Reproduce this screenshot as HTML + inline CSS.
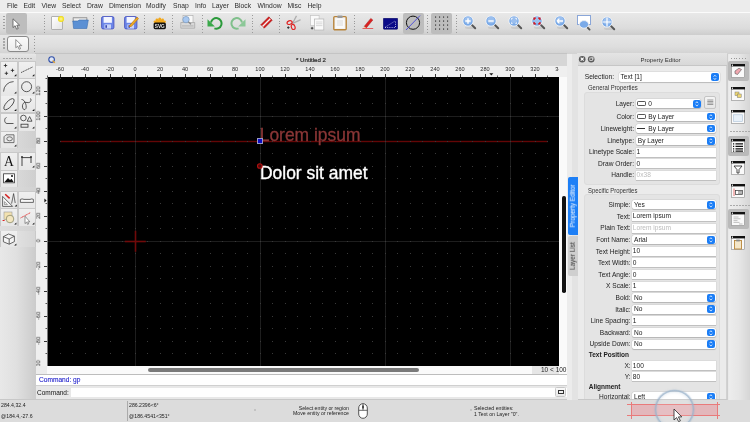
<!DOCTYPE html><html><head><meta charset="utf-8"><style>
*{margin:0;padding:0;box-sizing:border-box}
html,body{width:750px;height:422px;overflow:hidden;background:#e6e6e6;font-family:"Liberation Sans",sans-serif;color:#222;-webkit-font-smoothing:antialiased}
body>*{will-change:transform}
.a{position:absolute}
.t{position:absolute;white-space:nowrap;line-height:1}
#menu{left:0;top:0;width:750px;height:12.5px;background:#ececec}
#menu span{position:absolute;top:2.2px;font-size:6.75px;color:#2e2e2e}
#tb1{left:0;top:12px;width:750px;height:22.6px;background:linear-gradient(#fbfbfb 0,#fbfbfb 0.9px,#e8e8e8 1.2px,#dcdcdc 70%,#cdcdcd)}
#tb2{left:0;top:34.6px;width:750px;height:19px;background:linear-gradient(#e6e6e6,#dedede 60%,#d2d2d2)}
#left{left:0;top:53px;width:36px;height:346px;background:#e4e4e4;border-right:1px solid #c8c8c8}
#doc{left:36px;top:53px;width:531px;height:346px;background:#eaeaea}
#doctitle{left:36px;top:53px;width:531px;height:13px;background:#d6d6d6;border-top:1px solid #c4c4c4}
#rulerT{left:47px;top:66px;width:512px;height:11px;background:#efefef}
#rulerL{left:36px;top:77px;width:11px;height:289px;background:#efefef}
#corner{left:36px;top:66px;width:11px;height:11px;background:#efefef}
#canvas{left:47px;top:77px;width:512px;height:289px;background:#000;overflow:hidden}
#vscroll{left:559px;top:77.3px;width:7.5px;height:289px;background:#fafafa}
#hscroll{left:36px;top:366px;width:531px;height:8px;background:#fafafa}
#hist{left:36px;top:374px;width:531px;height:11px;background:#fff;border-top:1px solid #bdbdbd}
#cmd{left:36px;top:385px;width:531px;height:14px;background:#e8e8e8;border-top:1px solid #d0d0d0}
#gap{left:567px;top:53px;width:10px;height:346px;background:#dedede}
#prop{left:577px;top:53px;width:149px;height:346px;background:#ececec;border-left:1px solid #cfcfcf}
#rtb{left:726px;top:53px;width:24px;height:346px;background:linear-gradient(90deg,#d4d4d4,#e8e8e8 3px,#e4e4e4)}
#status{left:0;top:399px;width:750px;height:23px;background:#dcdcdc;border-top:1px solid #c8c8c8}
.rl{position:absolute;font-size:5.6px;line-height:1;color:#2a2a2a;white-space:nowrap}
</style></head><body>
<div id="menu" class="a"><span style="left:7px">File</span><span style="left:23.5px">Edit</span><span style="left:41.5px">View</span><span style="left:62px">Select</span><span style="left:87px">Draw</span><span style="left:109px">Dimension</span><span style="left:146px">Modify</span><span style="left:173px">Snap</span><span style="left:195px">Info</span><span style="left:212px">Layer</span><span style="left:234.5px">Block</span><span style="left:257.5px">Window</span><span style="left:287.5px">Misc</span><span style="left:307.5px">Help</span></div>
<div id="tb1" class="a"></div><div id="tb2" class="a"></div>
<div id="doc" class="a"></div><div id="doctitle" class="a"></div>
<div class="t" style="left:296px;top:57.2px;font-size:6.15px;color:#2a2a2a;-webkit-text-stroke:0.2px #2a2a2a">* Untitled 2</div>
<div id="corner" class="a"></div><div id="rulerT" class="a"></div><div id="rulerL" class="a"></div>
<svg class="a" style="left:47px;top:77px" width="512" height="289" viewBox="0 0 512 289"><rect width="512" height="289" fill="#000"/><rect x="88" y="0" width="1" height="289" fill="#1e1e1e"/><rect x="213" y="0" width="1" height="289" fill="#1e1e1e"/><rect x="338" y="0" width="1" height="289" fill="#1e1e1e"/><rect x="463" y="0" width="1" height="289" fill="#1e1e1e"/><rect x="0" y="39" width="512" height="1" fill="#1e1e1e"/><rect x="0" y="164" width="512" height="1" fill="#1e1e1e"/><rect x="13" y="63.80000000000001" width="488" height="1.4" fill="#640606"/><path d="M0 1h1v1h-1zM0 14h1v1h-1zM0 26h1v1h-1zM0 39h1v1h-1zM0 51h1v1h-1zM0 64h1v1h-1zM0 76h1v1h-1zM0 89h1v1h-1zM0 101h1v1h-1zM0 114h1v1h-1zM0 126h1v1h-1zM0 139h1v1h-1zM0 151h1v1h-1zM0 164h1v1h-1zM0 176h1v1h-1zM0 189h1v1h-1zM0 201h1v1h-1zM0 214h1v1h-1zM0 226h1v1h-1zM0 239h1v1h-1zM0 251h1v1h-1zM0 264h1v1h-1zM0 276h1v1h-1zM13 1h1v1h-1zM13 14h1v1h-1zM13 26h1v1h-1zM13 39h1v1h-1zM13 51h1v1h-1zM13 64h1v1h-1zM13 76h1v1h-1zM13 89h1v1h-1zM13 101h1v1h-1zM13 114h1v1h-1zM13 126h1v1h-1zM13 139h1v1h-1zM13 151h1v1h-1zM13 164h1v1h-1zM13 176h1v1h-1zM13 189h1v1h-1zM13 201h1v1h-1zM13 214h1v1h-1zM13 226h1v1h-1zM13 239h1v1h-1zM13 251h1v1h-1zM13 264h1v1h-1zM13 276h1v1h-1zM25 1h1v1h-1zM25 14h1v1h-1zM25 26h1v1h-1zM25 39h1v1h-1zM25 51h1v1h-1zM25 64h1v1h-1zM25 76h1v1h-1zM25 89h1v1h-1zM25 101h1v1h-1zM25 114h1v1h-1zM25 126h1v1h-1zM25 139h1v1h-1zM25 151h1v1h-1zM25 164h1v1h-1zM25 176h1v1h-1zM25 189h1v1h-1zM25 201h1v1h-1zM25 214h1v1h-1zM25 226h1v1h-1zM25 239h1v1h-1zM25 251h1v1h-1zM25 264h1v1h-1zM25 276h1v1h-1zM38 1h1v1h-1zM38 14h1v1h-1zM38 26h1v1h-1zM38 39h1v1h-1zM38 51h1v1h-1zM38 64h1v1h-1zM38 76h1v1h-1zM38 89h1v1h-1zM38 101h1v1h-1zM38 114h1v1h-1zM38 126h1v1h-1zM38 139h1v1h-1zM38 151h1v1h-1zM38 164h1v1h-1zM38 176h1v1h-1zM38 189h1v1h-1zM38 201h1v1h-1zM38 214h1v1h-1zM38 226h1v1h-1zM38 239h1v1h-1zM38 251h1v1h-1zM38 264h1v1h-1zM38 276h1v1h-1zM50 1h1v1h-1zM50 14h1v1h-1zM50 26h1v1h-1zM50 39h1v1h-1zM50 51h1v1h-1zM50 64h1v1h-1zM50 76h1v1h-1zM50 89h1v1h-1zM50 101h1v1h-1zM50 114h1v1h-1zM50 126h1v1h-1zM50 139h1v1h-1zM50 151h1v1h-1zM50 164h1v1h-1zM50 176h1v1h-1zM50 189h1v1h-1zM50 201h1v1h-1zM50 214h1v1h-1zM50 226h1v1h-1zM50 239h1v1h-1zM50 251h1v1h-1zM50 264h1v1h-1zM50 276h1v1h-1zM63 1h1v1h-1zM63 14h1v1h-1zM63 26h1v1h-1zM63 39h1v1h-1zM63 51h1v1h-1zM63 64h1v1h-1zM63 76h1v1h-1zM63 89h1v1h-1zM63 101h1v1h-1zM63 114h1v1h-1zM63 126h1v1h-1zM63 139h1v1h-1zM63 151h1v1h-1zM63 164h1v1h-1zM63 176h1v1h-1zM63 189h1v1h-1zM63 201h1v1h-1zM63 214h1v1h-1zM63 226h1v1h-1zM63 239h1v1h-1zM63 251h1v1h-1zM63 264h1v1h-1zM63 276h1v1h-1zM75 1h1v1h-1zM75 14h1v1h-1zM75 26h1v1h-1zM75 39h1v1h-1zM75 51h1v1h-1zM75 64h1v1h-1zM75 76h1v1h-1zM75 89h1v1h-1zM75 101h1v1h-1zM75 114h1v1h-1zM75 126h1v1h-1zM75 139h1v1h-1zM75 151h1v1h-1zM75 164h1v1h-1zM75 176h1v1h-1zM75 189h1v1h-1zM75 201h1v1h-1zM75 214h1v1h-1zM75 226h1v1h-1zM75 239h1v1h-1zM75 251h1v1h-1zM75 264h1v1h-1zM75 276h1v1h-1zM88 1h1v1h-1zM88 14h1v1h-1zM88 26h1v1h-1zM88 39h1v1h-1zM88 51h1v1h-1zM88 64h1v1h-1zM88 76h1v1h-1zM88 89h1v1h-1zM88 101h1v1h-1zM88 114h1v1h-1zM88 126h1v1h-1zM88 139h1v1h-1zM88 151h1v1h-1zM88 164h1v1h-1zM88 176h1v1h-1zM88 189h1v1h-1zM88 201h1v1h-1zM88 214h1v1h-1zM88 226h1v1h-1zM88 239h1v1h-1zM88 251h1v1h-1zM88 264h1v1h-1zM88 276h1v1h-1zM100 1h1v1h-1zM100 14h1v1h-1zM100 26h1v1h-1zM100 39h1v1h-1zM100 51h1v1h-1zM100 64h1v1h-1zM100 76h1v1h-1zM100 89h1v1h-1zM100 101h1v1h-1zM100 114h1v1h-1zM100 126h1v1h-1zM100 139h1v1h-1zM100 151h1v1h-1zM100 164h1v1h-1zM100 176h1v1h-1zM100 189h1v1h-1zM100 201h1v1h-1zM100 214h1v1h-1zM100 226h1v1h-1zM100 239h1v1h-1zM100 251h1v1h-1zM100 264h1v1h-1zM100 276h1v1h-1zM113 1h1v1h-1zM113 14h1v1h-1zM113 26h1v1h-1zM113 39h1v1h-1zM113 51h1v1h-1zM113 64h1v1h-1zM113 76h1v1h-1zM113 89h1v1h-1zM113 101h1v1h-1zM113 114h1v1h-1zM113 126h1v1h-1zM113 139h1v1h-1zM113 151h1v1h-1zM113 164h1v1h-1zM113 176h1v1h-1zM113 189h1v1h-1zM113 201h1v1h-1zM113 214h1v1h-1zM113 226h1v1h-1zM113 239h1v1h-1zM113 251h1v1h-1zM113 264h1v1h-1zM113 276h1v1h-1zM125 1h1v1h-1zM125 14h1v1h-1zM125 26h1v1h-1zM125 39h1v1h-1zM125 51h1v1h-1zM125 64h1v1h-1zM125 76h1v1h-1zM125 89h1v1h-1zM125 101h1v1h-1zM125 114h1v1h-1zM125 126h1v1h-1zM125 139h1v1h-1zM125 151h1v1h-1zM125 164h1v1h-1zM125 176h1v1h-1zM125 189h1v1h-1zM125 201h1v1h-1zM125 214h1v1h-1zM125 226h1v1h-1zM125 239h1v1h-1zM125 251h1v1h-1zM125 264h1v1h-1zM125 276h1v1h-1zM138 1h1v1h-1zM138 14h1v1h-1zM138 26h1v1h-1zM138 39h1v1h-1zM138 51h1v1h-1zM138 64h1v1h-1zM138 76h1v1h-1zM138 89h1v1h-1zM138 101h1v1h-1zM138 114h1v1h-1zM138 126h1v1h-1zM138 139h1v1h-1zM138 151h1v1h-1zM138 164h1v1h-1zM138 176h1v1h-1zM138 189h1v1h-1zM138 201h1v1h-1zM138 214h1v1h-1zM138 226h1v1h-1zM138 239h1v1h-1zM138 251h1v1h-1zM138 264h1v1h-1zM138 276h1v1h-1zM150 1h1v1h-1zM150 14h1v1h-1zM150 26h1v1h-1zM150 39h1v1h-1zM150 51h1v1h-1zM150 64h1v1h-1zM150 76h1v1h-1zM150 89h1v1h-1zM150 101h1v1h-1zM150 114h1v1h-1zM150 126h1v1h-1zM150 139h1v1h-1zM150 151h1v1h-1zM150 164h1v1h-1zM150 176h1v1h-1zM150 189h1v1h-1zM150 201h1v1h-1zM150 214h1v1h-1zM150 226h1v1h-1zM150 239h1v1h-1zM150 251h1v1h-1zM150 264h1v1h-1zM150 276h1v1h-1zM163 1h1v1h-1zM163 14h1v1h-1zM163 26h1v1h-1zM163 39h1v1h-1zM163 51h1v1h-1zM163 64h1v1h-1zM163 76h1v1h-1zM163 89h1v1h-1zM163 101h1v1h-1zM163 114h1v1h-1zM163 126h1v1h-1zM163 139h1v1h-1zM163 151h1v1h-1zM163 164h1v1h-1zM163 176h1v1h-1zM163 189h1v1h-1zM163 201h1v1h-1zM163 214h1v1h-1zM163 226h1v1h-1zM163 239h1v1h-1zM163 251h1v1h-1zM163 264h1v1h-1zM163 276h1v1h-1zM175 1h1v1h-1zM175 14h1v1h-1zM175 26h1v1h-1zM175 39h1v1h-1zM175 51h1v1h-1zM175 64h1v1h-1zM175 76h1v1h-1zM175 89h1v1h-1zM175 101h1v1h-1zM175 114h1v1h-1zM175 126h1v1h-1zM175 139h1v1h-1zM175 151h1v1h-1zM175 164h1v1h-1zM175 176h1v1h-1zM175 189h1v1h-1zM175 201h1v1h-1zM175 214h1v1h-1zM175 226h1v1h-1zM175 239h1v1h-1zM175 251h1v1h-1zM175 264h1v1h-1zM175 276h1v1h-1zM188 1h1v1h-1zM188 14h1v1h-1zM188 26h1v1h-1zM188 39h1v1h-1zM188 51h1v1h-1zM188 64h1v1h-1zM188 76h1v1h-1zM188 89h1v1h-1zM188 101h1v1h-1zM188 114h1v1h-1zM188 126h1v1h-1zM188 139h1v1h-1zM188 151h1v1h-1zM188 164h1v1h-1zM188 176h1v1h-1zM188 189h1v1h-1zM188 201h1v1h-1zM188 214h1v1h-1zM188 226h1v1h-1zM188 239h1v1h-1zM188 251h1v1h-1zM188 264h1v1h-1zM188 276h1v1h-1zM200 1h1v1h-1zM200 14h1v1h-1zM200 26h1v1h-1zM200 39h1v1h-1zM200 51h1v1h-1zM200 64h1v1h-1zM200 76h1v1h-1zM200 89h1v1h-1zM200 101h1v1h-1zM200 114h1v1h-1zM200 126h1v1h-1zM200 139h1v1h-1zM200 151h1v1h-1zM200 164h1v1h-1zM200 176h1v1h-1zM200 189h1v1h-1zM200 201h1v1h-1zM200 214h1v1h-1zM200 226h1v1h-1zM200 239h1v1h-1zM200 251h1v1h-1zM200 264h1v1h-1zM200 276h1v1h-1zM213 1h1v1h-1zM213 14h1v1h-1zM213 26h1v1h-1zM213 39h1v1h-1zM213 51h1v1h-1zM213 64h1v1h-1zM213 76h1v1h-1zM213 89h1v1h-1zM213 101h1v1h-1zM213 114h1v1h-1zM213 126h1v1h-1zM213 139h1v1h-1zM213 151h1v1h-1zM213 164h1v1h-1zM213 176h1v1h-1zM213 189h1v1h-1zM213 201h1v1h-1zM213 214h1v1h-1zM213 226h1v1h-1zM213 239h1v1h-1zM213 251h1v1h-1zM213 264h1v1h-1zM213 276h1v1h-1zM225 1h1v1h-1zM225 14h1v1h-1zM225 26h1v1h-1zM225 39h1v1h-1zM225 51h1v1h-1zM225 64h1v1h-1zM225 76h1v1h-1zM225 89h1v1h-1zM225 101h1v1h-1zM225 114h1v1h-1zM225 126h1v1h-1zM225 139h1v1h-1zM225 151h1v1h-1zM225 164h1v1h-1zM225 176h1v1h-1zM225 189h1v1h-1zM225 201h1v1h-1zM225 214h1v1h-1zM225 226h1v1h-1zM225 239h1v1h-1zM225 251h1v1h-1zM225 264h1v1h-1zM225 276h1v1h-1zM238 1h1v1h-1zM238 14h1v1h-1zM238 26h1v1h-1zM238 39h1v1h-1zM238 51h1v1h-1zM238 64h1v1h-1zM238 76h1v1h-1zM238 89h1v1h-1zM238 101h1v1h-1zM238 114h1v1h-1zM238 126h1v1h-1zM238 139h1v1h-1zM238 151h1v1h-1zM238 164h1v1h-1zM238 176h1v1h-1zM238 189h1v1h-1zM238 201h1v1h-1zM238 214h1v1h-1zM238 226h1v1h-1zM238 239h1v1h-1zM238 251h1v1h-1zM238 264h1v1h-1zM238 276h1v1h-1zM250 1h1v1h-1zM250 14h1v1h-1zM250 26h1v1h-1zM250 39h1v1h-1zM250 51h1v1h-1zM250 64h1v1h-1zM250 76h1v1h-1zM250 89h1v1h-1zM250 101h1v1h-1zM250 114h1v1h-1zM250 126h1v1h-1zM250 139h1v1h-1zM250 151h1v1h-1zM250 164h1v1h-1zM250 176h1v1h-1zM250 189h1v1h-1zM250 201h1v1h-1zM250 214h1v1h-1zM250 226h1v1h-1zM250 239h1v1h-1zM250 251h1v1h-1zM250 264h1v1h-1zM250 276h1v1h-1zM263 1h1v1h-1zM263 14h1v1h-1zM263 26h1v1h-1zM263 39h1v1h-1zM263 51h1v1h-1zM263 64h1v1h-1zM263 76h1v1h-1zM263 89h1v1h-1zM263 101h1v1h-1zM263 114h1v1h-1zM263 126h1v1h-1zM263 139h1v1h-1zM263 151h1v1h-1zM263 164h1v1h-1zM263 176h1v1h-1zM263 189h1v1h-1zM263 201h1v1h-1zM263 214h1v1h-1zM263 226h1v1h-1zM263 239h1v1h-1zM263 251h1v1h-1zM263 264h1v1h-1zM263 276h1v1h-1zM275 1h1v1h-1zM275 14h1v1h-1zM275 26h1v1h-1zM275 39h1v1h-1zM275 51h1v1h-1zM275 64h1v1h-1zM275 76h1v1h-1zM275 89h1v1h-1zM275 101h1v1h-1zM275 114h1v1h-1zM275 126h1v1h-1zM275 139h1v1h-1zM275 151h1v1h-1zM275 164h1v1h-1zM275 176h1v1h-1zM275 189h1v1h-1zM275 201h1v1h-1zM275 214h1v1h-1zM275 226h1v1h-1zM275 239h1v1h-1zM275 251h1v1h-1zM275 264h1v1h-1zM275 276h1v1h-1zM288 1h1v1h-1zM288 14h1v1h-1zM288 26h1v1h-1zM288 39h1v1h-1zM288 51h1v1h-1zM288 64h1v1h-1zM288 76h1v1h-1zM288 89h1v1h-1zM288 101h1v1h-1zM288 114h1v1h-1zM288 126h1v1h-1zM288 139h1v1h-1zM288 151h1v1h-1zM288 164h1v1h-1zM288 176h1v1h-1zM288 189h1v1h-1zM288 201h1v1h-1zM288 214h1v1h-1zM288 226h1v1h-1zM288 239h1v1h-1zM288 251h1v1h-1zM288 264h1v1h-1zM288 276h1v1h-1zM300 1h1v1h-1zM300 14h1v1h-1zM300 26h1v1h-1zM300 39h1v1h-1zM300 51h1v1h-1zM300 64h1v1h-1zM300 76h1v1h-1zM300 89h1v1h-1zM300 101h1v1h-1zM300 114h1v1h-1zM300 126h1v1h-1zM300 139h1v1h-1zM300 151h1v1h-1zM300 164h1v1h-1zM300 176h1v1h-1zM300 189h1v1h-1zM300 201h1v1h-1zM300 214h1v1h-1zM300 226h1v1h-1zM300 239h1v1h-1zM300 251h1v1h-1zM300 264h1v1h-1zM300 276h1v1h-1zM313 1h1v1h-1zM313 14h1v1h-1zM313 26h1v1h-1zM313 39h1v1h-1zM313 51h1v1h-1zM313 64h1v1h-1zM313 76h1v1h-1zM313 89h1v1h-1zM313 101h1v1h-1zM313 114h1v1h-1zM313 126h1v1h-1zM313 139h1v1h-1zM313 151h1v1h-1zM313 164h1v1h-1zM313 176h1v1h-1zM313 189h1v1h-1zM313 201h1v1h-1zM313 214h1v1h-1zM313 226h1v1h-1zM313 239h1v1h-1zM313 251h1v1h-1zM313 264h1v1h-1zM313 276h1v1h-1zM325 1h1v1h-1zM325 14h1v1h-1zM325 26h1v1h-1zM325 39h1v1h-1zM325 51h1v1h-1zM325 64h1v1h-1zM325 76h1v1h-1zM325 89h1v1h-1zM325 101h1v1h-1zM325 114h1v1h-1zM325 126h1v1h-1zM325 139h1v1h-1zM325 151h1v1h-1zM325 164h1v1h-1zM325 176h1v1h-1zM325 189h1v1h-1zM325 201h1v1h-1zM325 214h1v1h-1zM325 226h1v1h-1zM325 239h1v1h-1zM325 251h1v1h-1zM325 264h1v1h-1zM325 276h1v1h-1zM338 1h1v1h-1zM338 14h1v1h-1zM338 26h1v1h-1zM338 39h1v1h-1zM338 51h1v1h-1zM338 64h1v1h-1zM338 76h1v1h-1zM338 89h1v1h-1zM338 101h1v1h-1zM338 114h1v1h-1zM338 126h1v1h-1zM338 139h1v1h-1zM338 151h1v1h-1zM338 164h1v1h-1zM338 176h1v1h-1zM338 189h1v1h-1zM338 201h1v1h-1zM338 214h1v1h-1zM338 226h1v1h-1zM338 239h1v1h-1zM338 251h1v1h-1zM338 264h1v1h-1zM338 276h1v1h-1zM350 1h1v1h-1zM350 14h1v1h-1zM350 26h1v1h-1zM350 39h1v1h-1zM350 51h1v1h-1zM350 64h1v1h-1zM350 76h1v1h-1zM350 89h1v1h-1zM350 101h1v1h-1zM350 114h1v1h-1zM350 126h1v1h-1zM350 139h1v1h-1zM350 151h1v1h-1zM350 164h1v1h-1zM350 176h1v1h-1zM350 189h1v1h-1zM350 201h1v1h-1zM350 214h1v1h-1zM350 226h1v1h-1zM350 239h1v1h-1zM350 251h1v1h-1zM350 264h1v1h-1zM350 276h1v1h-1zM363 1h1v1h-1zM363 14h1v1h-1zM363 26h1v1h-1zM363 39h1v1h-1zM363 51h1v1h-1zM363 64h1v1h-1zM363 76h1v1h-1zM363 89h1v1h-1zM363 101h1v1h-1zM363 114h1v1h-1zM363 126h1v1h-1zM363 139h1v1h-1zM363 151h1v1h-1zM363 164h1v1h-1zM363 176h1v1h-1zM363 189h1v1h-1zM363 201h1v1h-1zM363 214h1v1h-1zM363 226h1v1h-1zM363 239h1v1h-1zM363 251h1v1h-1zM363 264h1v1h-1zM363 276h1v1h-1zM375 1h1v1h-1zM375 14h1v1h-1zM375 26h1v1h-1zM375 39h1v1h-1zM375 51h1v1h-1zM375 64h1v1h-1zM375 76h1v1h-1zM375 89h1v1h-1zM375 101h1v1h-1zM375 114h1v1h-1zM375 126h1v1h-1zM375 139h1v1h-1zM375 151h1v1h-1zM375 164h1v1h-1zM375 176h1v1h-1zM375 189h1v1h-1zM375 201h1v1h-1zM375 214h1v1h-1zM375 226h1v1h-1zM375 239h1v1h-1zM375 251h1v1h-1zM375 264h1v1h-1zM375 276h1v1h-1zM388 1h1v1h-1zM388 14h1v1h-1zM388 26h1v1h-1zM388 39h1v1h-1zM388 51h1v1h-1zM388 64h1v1h-1zM388 76h1v1h-1zM388 89h1v1h-1zM388 101h1v1h-1zM388 114h1v1h-1zM388 126h1v1h-1zM388 139h1v1h-1zM388 151h1v1h-1zM388 164h1v1h-1zM388 176h1v1h-1zM388 189h1v1h-1zM388 201h1v1h-1zM388 214h1v1h-1zM388 226h1v1h-1zM388 239h1v1h-1zM388 251h1v1h-1zM388 264h1v1h-1zM388 276h1v1h-1zM400 1h1v1h-1zM400 14h1v1h-1zM400 26h1v1h-1zM400 39h1v1h-1zM400 51h1v1h-1zM400 64h1v1h-1zM400 76h1v1h-1zM400 89h1v1h-1zM400 101h1v1h-1zM400 114h1v1h-1zM400 126h1v1h-1zM400 139h1v1h-1zM400 151h1v1h-1zM400 164h1v1h-1zM400 176h1v1h-1zM400 189h1v1h-1zM400 201h1v1h-1zM400 214h1v1h-1zM400 226h1v1h-1zM400 239h1v1h-1zM400 251h1v1h-1zM400 264h1v1h-1zM400 276h1v1h-1zM413 1h1v1h-1zM413 14h1v1h-1zM413 26h1v1h-1zM413 39h1v1h-1zM413 51h1v1h-1zM413 64h1v1h-1zM413 76h1v1h-1zM413 89h1v1h-1zM413 101h1v1h-1zM413 114h1v1h-1zM413 126h1v1h-1zM413 139h1v1h-1zM413 151h1v1h-1zM413 164h1v1h-1zM413 176h1v1h-1zM413 189h1v1h-1zM413 201h1v1h-1zM413 214h1v1h-1zM413 226h1v1h-1zM413 239h1v1h-1zM413 251h1v1h-1zM413 264h1v1h-1zM413 276h1v1h-1zM425 1h1v1h-1zM425 14h1v1h-1zM425 26h1v1h-1zM425 39h1v1h-1zM425 51h1v1h-1zM425 64h1v1h-1zM425 76h1v1h-1zM425 89h1v1h-1zM425 101h1v1h-1zM425 114h1v1h-1zM425 126h1v1h-1zM425 139h1v1h-1zM425 151h1v1h-1zM425 164h1v1h-1zM425 176h1v1h-1zM425 189h1v1h-1zM425 201h1v1h-1zM425 214h1v1h-1zM425 226h1v1h-1zM425 239h1v1h-1zM425 251h1v1h-1zM425 264h1v1h-1zM425 276h1v1h-1zM438 1h1v1h-1zM438 14h1v1h-1zM438 26h1v1h-1zM438 39h1v1h-1zM438 51h1v1h-1zM438 64h1v1h-1zM438 76h1v1h-1zM438 89h1v1h-1zM438 101h1v1h-1zM438 114h1v1h-1zM438 126h1v1h-1zM438 139h1v1h-1zM438 151h1v1h-1zM438 164h1v1h-1zM438 176h1v1h-1zM438 189h1v1h-1zM438 201h1v1h-1zM438 214h1v1h-1zM438 226h1v1h-1zM438 239h1v1h-1zM438 251h1v1h-1zM438 264h1v1h-1zM438 276h1v1h-1zM450 1h1v1h-1zM450 14h1v1h-1zM450 26h1v1h-1zM450 39h1v1h-1zM450 51h1v1h-1zM450 64h1v1h-1zM450 76h1v1h-1zM450 89h1v1h-1zM450 101h1v1h-1zM450 114h1v1h-1zM450 126h1v1h-1zM450 139h1v1h-1zM450 151h1v1h-1zM450 164h1v1h-1zM450 176h1v1h-1zM450 189h1v1h-1zM450 201h1v1h-1zM450 214h1v1h-1zM450 226h1v1h-1zM450 239h1v1h-1zM450 251h1v1h-1zM450 264h1v1h-1zM450 276h1v1h-1zM463 1h1v1h-1zM463 14h1v1h-1zM463 26h1v1h-1zM463 39h1v1h-1zM463 51h1v1h-1zM463 64h1v1h-1zM463 76h1v1h-1zM463 89h1v1h-1zM463 101h1v1h-1zM463 114h1v1h-1zM463 126h1v1h-1zM463 139h1v1h-1zM463 151h1v1h-1zM463 164h1v1h-1zM463 176h1v1h-1zM463 189h1v1h-1zM463 201h1v1h-1zM463 214h1v1h-1zM463 226h1v1h-1zM463 239h1v1h-1zM463 251h1v1h-1zM463 264h1v1h-1zM463 276h1v1h-1zM475 1h1v1h-1zM475 14h1v1h-1zM475 26h1v1h-1zM475 39h1v1h-1zM475 51h1v1h-1zM475 64h1v1h-1zM475 76h1v1h-1zM475 89h1v1h-1zM475 101h1v1h-1zM475 114h1v1h-1zM475 126h1v1h-1zM475 139h1v1h-1zM475 151h1v1h-1zM475 164h1v1h-1zM475 176h1v1h-1zM475 189h1v1h-1zM475 201h1v1h-1zM475 214h1v1h-1zM475 226h1v1h-1zM475 239h1v1h-1zM475 251h1v1h-1zM475 264h1v1h-1zM475 276h1v1h-1zM488 1h1v1h-1zM488 14h1v1h-1zM488 26h1v1h-1zM488 39h1v1h-1zM488 51h1v1h-1zM488 64h1v1h-1zM488 76h1v1h-1zM488 89h1v1h-1zM488 101h1v1h-1zM488 114h1v1h-1zM488 126h1v1h-1zM488 139h1v1h-1zM488 151h1v1h-1zM488 164h1v1h-1zM488 176h1v1h-1zM488 189h1v1h-1zM488 201h1v1h-1zM488 214h1v1h-1zM488 226h1v1h-1zM488 239h1v1h-1zM488 251h1v1h-1zM488 264h1v1h-1zM488 276h1v1h-1zM500 1h1v1h-1zM500 14h1v1h-1zM500 26h1v1h-1zM500 39h1v1h-1zM500 51h1v1h-1zM500 64h1v1h-1zM500 76h1v1h-1zM500 89h1v1h-1zM500 101h1v1h-1zM500 114h1v1h-1zM500 126h1v1h-1zM500 139h1v1h-1zM500 151h1v1h-1zM500 164h1v1h-1zM500 176h1v1h-1zM500 189h1v1h-1zM500 201h1v1h-1zM500 214h1v1h-1zM500 226h1v1h-1zM500 239h1v1h-1zM500 251h1v1h-1zM500 264h1v1h-1zM500 276h1v1h-1z" fill="#3a3a3a"/><rect x="0" y="0" width="1" height="289" fill="#7a7a7a"/><rect x="77.8" y="163.7" width="21" height="1.6" fill="#700a0a"/><rect x="87.69999999999999" y="153.8" width="1.6" height="21" fill="#700a0a"/><text x="212.7" y="63.80000000000001" font-family="Liberation Sans" font-size="17.46" fill="#8a3636" stroke="#8a3636" stroke-width="0.3">Lorem ipsum</text><text x="213" y="101.5" font-family="Liberation Sans" font-size="17.46" fill="#fff" stroke="#fff" stroke-width="0.35">Dolor sit amet</text><rect x="210.5" y="61.5" width="5" height="5" fill="#0c0cc0" stroke="#9a9ac8" stroke-width="1"/><circle cx="212.8" cy="89" r="2.3" fill="#500808" stroke="#b01010" stroke-width="1.1"/></svg>
<svg class="a" style="left:47px;top:66px" width="512" height="11"><line x1="0.5" y1="9.5" x2="0.5" y2="11" stroke="#555" stroke-width="1"/><line x1="13.5" y1="8" x2="13.5" y2="11" stroke="#333" stroke-width="1"/><line x1="25.5" y1="9.5" x2="25.5" y2="11" stroke="#555" stroke-width="1"/><line x1="38.5" y1="8" x2="38.5" y2="11" stroke="#333" stroke-width="1"/><line x1="50.5" y1="9.5" x2="50.5" y2="11" stroke="#555" stroke-width="1"/><line x1="63.5" y1="8" x2="63.5" y2="11" stroke="#333" stroke-width="1"/><line x1="75.5" y1="9.5" x2="75.5" y2="11" stroke="#555" stroke-width="1"/><line x1="88.5" y1="8" x2="88.5" y2="11" stroke="#333" stroke-width="1"/><line x1="100.5" y1="9.5" x2="100.5" y2="11" stroke="#555" stroke-width="1"/><line x1="113.5" y1="8" x2="113.5" y2="11" stroke="#333" stroke-width="1"/><line x1="125.5" y1="9.5" x2="125.5" y2="11" stroke="#555" stroke-width="1"/><line x1="138.5" y1="8" x2="138.5" y2="11" stroke="#333" stroke-width="1"/><line x1="150.5" y1="9.5" x2="150.5" y2="11" stroke="#555" stroke-width="1"/><line x1="163.5" y1="8" x2="163.5" y2="11" stroke="#333" stroke-width="1"/><line x1="175.5" y1="9.5" x2="175.5" y2="11" stroke="#555" stroke-width="1"/><line x1="188.5" y1="8" x2="188.5" y2="11" stroke="#333" stroke-width="1"/><line x1="200.5" y1="9.5" x2="200.5" y2="11" stroke="#555" stroke-width="1"/><line x1="213.5" y1="8" x2="213.5" y2="11" stroke="#333" stroke-width="1"/><line x1="225.5" y1="9.5" x2="225.5" y2="11" stroke="#555" stroke-width="1"/><line x1="238.5" y1="8" x2="238.5" y2="11" stroke="#333" stroke-width="1"/><line x1="250.5" y1="9.5" x2="250.5" y2="11" stroke="#555" stroke-width="1"/><line x1="263.5" y1="8" x2="263.5" y2="11" stroke="#333" stroke-width="1"/><line x1="275.5" y1="9.5" x2="275.5" y2="11" stroke="#555" stroke-width="1"/><line x1="288.5" y1="8" x2="288.5" y2="11" stroke="#333" stroke-width="1"/><line x1="300.5" y1="9.5" x2="300.5" y2="11" stroke="#555" stroke-width="1"/><line x1="313.5" y1="8" x2="313.5" y2="11" stroke="#333" stroke-width="1"/><line x1="325.5" y1="9.5" x2="325.5" y2="11" stroke="#555" stroke-width="1"/><line x1="338.5" y1="8" x2="338.5" y2="11" stroke="#333" stroke-width="1"/><line x1="350.5" y1="9.5" x2="350.5" y2="11" stroke="#555" stroke-width="1"/><line x1="363.5" y1="8" x2="363.5" y2="11" stroke="#333" stroke-width="1"/><line x1="375.5" y1="9.5" x2="375.5" y2="11" stroke="#555" stroke-width="1"/><line x1="388.5" y1="8" x2="388.5" y2="11" stroke="#333" stroke-width="1"/><line x1="400.5" y1="9.5" x2="400.5" y2="11" stroke="#555" stroke-width="1"/><line x1="413.5" y1="8" x2="413.5" y2="11" stroke="#333" stroke-width="1"/><line x1="425.5" y1="9.5" x2="425.5" y2="11" stroke="#555" stroke-width="1"/><line x1="438.5" y1="8" x2="438.5" y2="11" stroke="#333" stroke-width="1"/><line x1="450.5" y1="9.5" x2="450.5" y2="11" stroke="#555" stroke-width="1"/><line x1="463.5" y1="8" x2="463.5" y2="11" stroke="#333" stroke-width="1"/><line x1="475.5" y1="9.5" x2="475.5" y2="11" stroke="#555" stroke-width="1"/><line x1="488.5" y1="8" x2="488.5" y2="11" stroke="#333" stroke-width="1"/><line x1="500.5" y1="9.5" x2="500.5" y2="11" stroke="#555" stroke-width="1"/><path d="M442.3 7.2H446.3L444.3 9.6Z" fill="#111"/></svg>
<div class="rl" style="left:45.0px;top:67px;width:30px;text-align:center">-60</div>
<div class="rl" style="left:70.0px;top:67px;width:30px;text-align:center">-40</div>
<div class="rl" style="left:95.0px;top:67px;width:30px;text-align:center">-20</div>
<div class="rl" style="left:120.0px;top:67px;width:30px;text-align:center">0</div>
<div class="rl" style="left:145.0px;top:67px;width:30px;text-align:center">20</div>
<div class="rl" style="left:170.0px;top:67px;width:30px;text-align:center">40</div>
<div class="rl" style="left:195.0px;top:67px;width:30px;text-align:center">60</div>
<div class="rl" style="left:220.0px;top:67px;width:30px;text-align:center">80</div>
<div class="rl" style="left:245.0px;top:67px;width:30px;text-align:center">100</div>
<div class="rl" style="left:270.0px;top:67px;width:30px;text-align:center">120</div>
<div class="rl" style="left:295.0px;top:67px;width:30px;text-align:center">140</div>
<div class="rl" style="left:320.0px;top:67px;width:30px;text-align:center">160</div>
<div class="rl" style="left:345.0px;top:67px;width:30px;text-align:center">180</div>
<div class="rl" style="left:370.0px;top:67px;width:30px;text-align:center">200</div>
<div class="rl" style="left:395.0px;top:67px;width:30px;text-align:center">220</div>
<div class="rl" style="left:420.0px;top:67px;width:30px;text-align:center">240</div>
<div class="rl" style="left:445.0px;top:67px;width:30px;text-align:center">260</div>
<div class="rl" style="left:470.0px;top:67px;width:30px;text-align:center">280</div>
<div class="rl" style="left:495.0px;top:67px;width:30px;text-align:center">300</div>
<div class="rl" style="left:520.0px;top:67px;width:30px;text-align:center">320</div>
<div class="rl" style="left:545.0px;top:67px;width:30px;text-align:center">340</div>
<svg class="a" style="left:36px;top:77px" width="11" height="289"><line x1="9.5" y1="1.5" x2="11" y2="1.5" stroke="#555"/><line x1="8" y1="14.5" x2="11" y2="14.5" stroke="#333"/><line x1="9.5" y1="26.5" x2="11" y2="26.5" stroke="#555"/><line x1="8" y1="39.5" x2="11" y2="39.5" stroke="#333"/><line x1="9.5" y1="51.5" x2="11" y2="51.5" stroke="#555"/><line x1="8" y1="64.5" x2="11" y2="64.5" stroke="#333"/><line x1="9.5" y1="76.5" x2="11" y2="76.5" stroke="#555"/><line x1="8" y1="89.5" x2="11" y2="89.5" stroke="#333"/><line x1="9.5" y1="101.5" x2="11" y2="101.5" stroke="#555"/><line x1="8" y1="114.5" x2="11" y2="114.5" stroke="#333"/><line x1="9.5" y1="126.5" x2="11" y2="126.5" stroke="#555"/><line x1="8" y1="139.5" x2="11" y2="139.5" stroke="#333"/><line x1="9.5" y1="151.5" x2="11" y2="151.5" stroke="#555"/><line x1="8" y1="164.5" x2="11" y2="164.5" stroke="#333"/><line x1="9.5" y1="176.5" x2="11" y2="176.5" stroke="#555"/><line x1="8" y1="189.5" x2="11" y2="189.5" stroke="#333"/><line x1="9.5" y1="201.5" x2="11" y2="201.5" stroke="#555"/><line x1="8" y1="214.5" x2="11" y2="214.5" stroke="#333"/><line x1="9.5" y1="226.5" x2="11" y2="226.5" stroke="#555"/><line x1="8" y1="239.5" x2="11" y2="239.5" stroke="#333"/><line x1="9.5" y1="251.5" x2="11" y2="251.5" stroke="#555"/><line x1="8" y1="264.5" x2="11" y2="264.5" stroke="#333"/><line x1="9.5" y1="276.5" x2="11" y2="276.5" stroke="#555"/><path d="M8.4 121.5V125.5L10.6 123.5Z" fill="#111"/></svg>
<div class="rl" style="left:24.4px;top:88.2px;width:30px;text-align:center;transform:rotate(-90deg)">120</div>
<div class="rl" style="left:24.4px;top:113.2px;width:30px;text-align:center;transform:rotate(-90deg)">100</div>
<div class="rl" style="left:24.4px;top:138.2px;width:30px;text-align:center;transform:rotate(-90deg)">80</div>
<div class="rl" style="left:24.4px;top:163.2px;width:30px;text-align:center;transform:rotate(-90deg)">60</div>
<div class="rl" style="left:24.4px;top:188.2px;width:30px;text-align:center;transform:rotate(-90deg)">40</div>
<div class="rl" style="left:24.4px;top:213.2px;width:30px;text-align:center;transform:rotate(-90deg)">20</div>
<div class="rl" style="left:24.4px;top:238.2px;width:30px;text-align:center;transform:rotate(-90deg)">0</div>
<div class="rl" style="left:24.4px;top:263.2px;width:30px;text-align:center;transform:rotate(-90deg)">-20</div>
<div class="rl" style="left:24.4px;top:288.2px;width:30px;text-align:center;transform:rotate(-90deg)">-40</div>
<div class="rl" style="left:24.4px;top:313.2px;width:30px;text-align:center;transform:rotate(-90deg)">-60</div>
<div class="rl" style="left:24.4px;top:338.2px;width:30px;text-align:center;transform:rotate(-90deg)">-80</div>
<div class="rl" style="left:24.4px;top:363.2px;width:30px;text-align:center;transform:rotate(-90deg)">-100</div>
<div class="a" style="left:559px;top:66px;width:7.5px;height:11.3px;background:#efefef"></div><div id="vscroll" class="a"></div><div id="hscroll" class="a"></div><div id="hist" class="a"></div><div id="cmd" class="a"></div>
<div id="status" class="a"></div>
<div class="a" style="left:0;top:0;width:750px;height:399px;overflow:hidden"><div class="a" style="left:577px;top:53px;width:150px;height:13px;background:linear-gradient(#e4e4e4,#d8d8d8);border-bottom:1px solid #c6c6c6"></div><svg class="a" style="left:578px;top:55px" width="18" height="9" viewBox="0 0 18 9"><circle cx="4.2" cy="4.2" r="3.3" fill="#5a5a5a"/><path d="M2.7 2.7L5.7 5.7M5.7 2.7L2.7 5.7" stroke="#f4f4f4" stroke-width="1.2"/><rect x="3.5" y="3.5" width="1.4" height="1.4" fill="#fff"/><circle cx="13.2" cy="4.2" r="3.3" fill="#5a5a5a"/><rect x="11.8" y="3" width="2.6" height="2.4" fill="none" stroke="#eee" stroke-width="0.7"/><path d="M12.6 2.2H15.2V4.6" fill="none" stroke="#eee" stroke-width="0.6"/></svg><div class="t" style="left:640.5px;top:56.8px;font-size:6px;color:#333">Property Editor</div><div class="a" style="left:577px;top:66px;width:150px;height:333px;background:#ebebeb;border-left:1px solid #d2d2d2;border-right:1px solid #d2d2d2"></div><div class="t" style="left:584.7px;top:74px;font-size:6.7px;color:#222">Selection:</div><div class="a" style="left:618.5px;top:71.8px;width:101.10000000000002px;height:10.200000000000003px;background:#fff;border-radius:2px;box-shadow:0 0 0 0.5px rgba(0,0,0,0.07),0 0.5px 1px rgba(0,0,0,0.18)"></div><div class="t" style="left:620.5px;top:73.89999999999999px;font-size:6.6px;color:#222">Text [1]</div><div class="a" style="left:711.1px;top:72.5px;width:7.8px;height:8.800000000000002px;background:#1a7df6;border-radius:2px"></div><svg class="a" style="left:711.1px;top:72.5px" width="7.8" height="8.800000000000002" viewBox="0 0 7.8 8.800000000000002"><path d="M2.6 3.700000000000001L3.9 2.200000000000001L5.2 3.700000000000001M2.6 5.100000000000001L3.9 6.600000000000001L5.2 5.100000000000001" stroke="#fff" stroke-width="0.75" fill="none"/></svg><div class="t" style="left:587.6px;top:85.4px;font-size:6.3px;color:#333;transform:scaleX(0.94);transform-origin:0 0">General Properties</div><div class="a" style="left:584.2px;top:91.8px;width:136px;height:93px;background:#e4e4e4;border-radius:3px;border:1px solid #dcdcdc"></div><div class="t" style="left:587.8px;top:187.6px;font-size:6.3px;color:#333;transform:scaleX(0.94);transform-origin:0 0">Specific Properties</div><div class="a" style="left:584.2px;top:194px;width:136px;height:210px;background:#e4e4e4;border-radius:3px;border:1px solid #dcdcdc"></div><div class="t" style="right:116px;top:101.0px;font-size:6.6px;color:#222;font-weight:normal">Layer:</div><div class="a" style="left:635.8px;top:99.2px;width:65.5px;height:9.199999999999989px;background:#fff;border-radius:2px;box-shadow:0 0 0 0.5px rgba(0,0,0,0.07),0 0.5px 1px rgba(0,0,0,0.18)"></div><div class="a" style="left:637.0px;top:101.39999999999999px;width:8.8px;height:4.8px;border:0.8px solid #555;border-radius:1.2px;background:#fff"></div><div class="t" style="left:648.3px;top:100.8px;font-size:6.6px;color:#222">0</div><div class="a" style="left:692.8px;top:99.9px;width:7.8px;height:7.799999999999988px;background:#1a7df6;border-radius:2px"></div><svg class="a" style="left:692.8px;top:99.9px" width="7.8" height="7.799999999999988" viewBox="0 0 7.8 7.799999999999988"><path d="M2.6 3.199999999999994L3.9 1.699999999999994L5.2 3.199999999999994M2.6 4.599999999999994L3.9 6.099999999999994L5.2 4.599999999999994" stroke="#fff" stroke-width="0.75" fill="none"/></svg><div class="t" style="right:116px;top:113.7px;font-size:6.6px;color:#222;font-weight:normal">Color:</div><div class="a" style="left:635.8px;top:111.9px;width:80.0px;height:9.199999999999989px;background:#fff;border-radius:2px;box-shadow:0 0 0 0.5px rgba(0,0,0,0.07),0 0.5px 1px rgba(0,0,0,0.18)"></div><div class="a" style="left:637.0px;top:114.1px;width:8.8px;height:4.8px;border:0.8px solid #555;border-radius:1.2px;background:#fff"></div><div class="t" style="left:648.3px;top:113.5px;font-size:6.6px;color:#222">By Layer</div><div class="a" style="left:707.3px;top:112.60000000000001px;width:7.8px;height:7.799999999999988px;background:#1a7df6;border-radius:2px"></div><svg class="a" style="left:707.3px;top:112.60000000000001px" width="7.8" height="7.799999999999988" viewBox="0 0 7.8 7.799999999999988"><path d="M2.6 3.199999999999994L3.9 1.699999999999994L5.2 3.199999999999994M2.6 4.599999999999994L3.9 6.099999999999994L5.2 4.599999999999994" stroke="#fff" stroke-width="0.75" fill="none"/></svg><div class="t" style="right:116px;top:125.79999999999998px;font-size:6.6px;color:#222;font-weight:normal">Lineweight:</div><div class="a" style="left:635.8px;top:124.0px;width:80.0px;height:9.199999999999989px;background:#fff;border-radius:2px;box-shadow:0 0 0 0.5px rgba(0,0,0,0.07),0 0.5px 1px rgba(0,0,0,0.18)"></div><div class="a" style="left:637.3px;top:128.29999999999998px;width:8px;height:0.7px;background:#333"></div><div class="t" style="left:648.3px;top:125.6px;font-size:6.6px;color:#222">By Layer</div><div class="a" style="left:707.3px;top:124.7px;width:7.8px;height:7.799999999999988px;background:#1a7df6;border-radius:2px"></div><svg class="a" style="left:707.3px;top:124.7px" width="7.8" height="7.799999999999988" viewBox="0 0 7.8 7.799999999999988"><path d="M2.6 3.199999999999994L3.9 1.699999999999994L5.2 3.199999999999994M2.6 4.599999999999994L3.9 6.099999999999994L5.2 4.599999999999994" stroke="#fff" stroke-width="0.75" fill="none"/></svg><div class="t" style="right:116px;top:137.89999999999998px;font-size:6.6px;color:#222;font-weight:normal">Linetype:</div><div class="a" style="left:635.8px;top:136.1px;width:80.0px;height:9.199999999999989px;background:#fff;border-radius:2px;box-shadow:0 0 0 0.5px rgba(0,0,0,0.07),0 0.5px 1px rgba(0,0,0,0.18)"></div><div class="t" style="left:637.8px;top:137.7px;font-size:6.6px;color:#222">By Layer</div><div class="a" style="left:707.3px;top:136.79999999999998px;width:7.8px;height:7.799999999999988px;background:#1a7df6;border-radius:2px"></div><svg class="a" style="left:707.3px;top:136.79999999999998px" width="7.8" height="7.799999999999988" viewBox="0 0 7.8 7.799999999999988"><path d="M2.6 3.199999999999994L3.9 1.699999999999994L5.2 3.199999999999994M2.6 4.599999999999994L3.9 6.099999999999994L5.2 4.599999999999994" stroke="#fff" stroke-width="0.75" fill="none"/></svg><div class="t" style="right:116px;top:149.29999999999998px;font-size:6.6px;color:#222;font-weight:normal">Linetype Scale:</div><div class="a" style="left:635.8px;top:147.5px;width:80.40000000000009px;height:9.199999999999989px;background:#fff;box-shadow:0 0 0 0.5px rgba(0,0,0,0.08),0 0.5px 0.5px rgba(0,0,0,0.12)"></div><div class="t" style="left:636.5999999999999px;top:149.1px;font-size:6.6px;color:#222">1</div><div class="t" style="right:116px;top:160.79999999999998px;font-size:6.6px;color:#222;font-weight:normal">Draw Order:</div><div class="a" style="left:635.8px;top:159.0px;width:80.40000000000009px;height:9.199999999999989px;background:#fff;box-shadow:0 0 0 0.5px rgba(0,0,0,0.08),0 0.5px 0.5px rgba(0,0,0,0.12)"></div><div class="t" style="left:636.5999999999999px;top:160.6px;font-size:6.6px;color:#222">0</div><div class="t" style="right:116px;top:172.39999999999998px;font-size:6.6px;color:#222;font-weight:normal">Handle:</div><div class="a" style="left:635.8px;top:170.6px;width:80.40000000000009px;height:9.199999999999989px;background:#fff;box-shadow:0 0 0 0.5px rgba(0,0,0,0.08),0 0.5px 0.5px rgba(0,0,0,0.12)"></div><div class="t" style="left:636.5999999999999px;top:172.2px;font-size:6.6px;color:#bbb">0x38</div><div class="a" style="left:703.6px;top:96.4px;width:12.6px;height:12.4px;background:linear-gradient(#f4f4f4,#e6e6e6);border:0.8px solid #c4c4c4;border-radius:2px"></div><svg class="a" style="left:703.6px;top:96.4px" width="12.6" height="12.4"><path d="M3.3 4h6M3.3 5.5h6M3.3 7h6M3.3 8.5h6" stroke="#777" stroke-width="0.7"/></svg><div class="t" style="right:119.39999999999998px;top:201.99999999999997px;font-size:6.6px;color:#222;font-weight:normal">Simple:</div><div class="a" style="left:632px;top:200.2px;width:83.79999999999995px;height:9.199999999999989px;background:#fff;border-radius:2px;box-shadow:0 0 0 0.5px rgba(0,0,0,0.07),0 0.5px 1px rgba(0,0,0,0.18)"></div><div class="t" style="left:634px;top:201.79999999999998px;font-size:6.6px;color:#222">Yes</div><div class="a" style="left:707.3px;top:200.89999999999998px;width:7.8px;height:7.799999999999988px;background:#1a7df6;border-radius:2px"></div><svg class="a" style="left:707.3px;top:200.89999999999998px" width="7.8" height="7.799999999999988" viewBox="0 0 7.8 7.799999999999988"><path d="M2.6 3.199999999999994L3.9 1.699999999999994L5.2 3.199999999999994M2.6 4.599999999999994L3.9 6.099999999999994L5.2 4.599999999999994" stroke="#fff" stroke-width="0.75" fill="none"/></svg><div class="t" style="right:119.39999999999998px;top:213.6px;font-size:6.6px;color:#222;font-weight:normal">Text:</div><div class="a" style="left:632px;top:211.8px;width:84px;height:9.199999999999989px;background:#fff;box-shadow:0 0 0 0.5px rgba(0,0,0,0.08),0 0.5px 0.5px rgba(0,0,0,0.12)"></div><div class="t" style="left:632.8px;top:213.4px;font-size:6.6px;color:#222">Lorem ipsum</div><div class="t" style="right:119.39999999999998px;top:225.29999999999998px;font-size:6.6px;color:#222;font-weight:normal">Plain Text:</div><div class="a" style="left:632px;top:223.5px;width:84px;height:9.199999999999989px;background:#fff;box-shadow:0 0 0 0.5px rgba(0,0,0,0.08),0 0.5px 0.5px rgba(0,0,0,0.12)"></div><div class="t" style="left:632.8px;top:225.1px;font-size:6.6px;color:#bbb">Lorem ipsum</div><div class="t" style="right:119.39999999999998px;top:236.89999999999998px;font-size:6.6px;color:#222;font-weight:normal">Font Name:</div><div class="a" style="left:632px;top:235.1px;width:83.79999999999995px;height:9.199999999999989px;background:#fff;border-radius:2px;box-shadow:0 0 0 0.5px rgba(0,0,0,0.07),0 0.5px 1px rgba(0,0,0,0.18)"></div><div class="t" style="left:634px;top:236.7px;font-size:6.6px;color:#222">Arial</div><div class="a" style="left:707.3px;top:235.79999999999998px;width:7.8px;height:7.799999999999988px;background:#1a7df6;border-radius:2px"></div><svg class="a" style="left:707.3px;top:235.79999999999998px" width="7.8" height="7.799999999999988" viewBox="0 0 7.8 7.799999999999988"><path d="M2.6 3.199999999999994L3.9 1.699999999999994L5.2 3.199999999999994M2.6 4.599999999999994L3.9 6.099999999999994L5.2 4.599999999999994" stroke="#fff" stroke-width="0.75" fill="none"/></svg><div class="t" style="right:119.39999999999998px;top:248.49999999999997px;font-size:6.6px;color:#222;font-weight:normal">Text Height:</div><div class="a" style="left:632px;top:246.7px;width:84px;height:9.199999999999989px;background:#fff;box-shadow:0 0 0 0.5px rgba(0,0,0,0.08),0 0.5px 0.5px rgba(0,0,0,0.12)"></div><div class="t" style="left:632.8px;top:248.29999999999998px;font-size:6.6px;color:#222">10</div><div class="t" style="right:119.39999999999998px;top:260.1px;font-size:6.6px;color:#222;font-weight:normal">Text Width:</div><div class="a" style="left:632px;top:258.3px;width:84px;height:9.200000000000045px;background:#fff;box-shadow:0 0 0 0.5px rgba(0,0,0,0.08),0 0.5px 0.5px rgba(0,0,0,0.12)"></div><div class="t" style="left:632.8px;top:259.90000000000003px;font-size:6.6px;color:#222">0</div><div class="t" style="right:119.39999999999998px;top:271.7px;font-size:6.6px;color:#222;font-weight:normal">Text Angle:</div><div class="a" style="left:632px;top:269.9px;width:84px;height:9.200000000000045px;background:#fff;box-shadow:0 0 0 0.5px rgba(0,0,0,0.08),0 0.5px 0.5px rgba(0,0,0,0.12)"></div><div class="t" style="left:632.8px;top:271.5px;font-size:6.6px;color:#222">0</div><div class="t" style="right:119.39999999999998px;top:283.3px;font-size:6.6px;color:#222;font-weight:normal">X Scale:</div><div class="a" style="left:632px;top:281.5px;width:84px;height:9.200000000000045px;background:#fff;box-shadow:0 0 0 0.5px rgba(0,0,0,0.08),0 0.5px 0.5px rgba(0,0,0,0.12)"></div><div class="t" style="left:632.8px;top:283.1px;font-size:6.6px;color:#222">1</div><div class="t" style="right:119.39999999999998px;top:294.90000000000003px;font-size:6.6px;color:#222;font-weight:normal">Bold:</div><div class="a" style="left:632px;top:293.1px;width:83.79999999999995px;height:9.200000000000045px;background:#fff;border-radius:2px;box-shadow:0 0 0 0.5px rgba(0,0,0,0.07),0 0.5px 1px rgba(0,0,0,0.18)"></div><div class="t" style="left:634px;top:294.70000000000005px;font-size:6.6px;color:#222">No</div><div class="a" style="left:707.3px;top:293.8px;width:7.8px;height:7.800000000000045px;background:#1a7df6;border-radius:2px"></div><svg class="a" style="left:707.3px;top:293.8px" width="7.8" height="7.800000000000045" viewBox="0 0 7.8 7.800000000000045"><path d="M2.6 3.2000000000000224L3.9 1.7000000000000224L5.2 3.2000000000000224M2.6 4.600000000000023L3.9 6.100000000000023L5.2 4.600000000000023" stroke="#fff" stroke-width="0.75" fill="none"/></svg><div class="t" style="right:119.39999999999998px;top:306.5px;font-size:6.6px;color:#222;font-weight:normal">Italic:</div><div class="a" style="left:632px;top:304.7px;width:83.79999999999995px;height:9.200000000000045px;background:#fff;border-radius:2px;box-shadow:0 0 0 0.5px rgba(0,0,0,0.07),0 0.5px 1px rgba(0,0,0,0.18)"></div><div class="t" style="left:634px;top:306.3px;font-size:6.6px;color:#222">No</div><div class="a" style="left:707.3px;top:305.4px;width:7.8px;height:7.800000000000045px;background:#1a7df6;border-radius:2px"></div><svg class="a" style="left:707.3px;top:305.4px" width="7.8" height="7.800000000000045" viewBox="0 0 7.8 7.800000000000045"><path d="M2.6 3.2000000000000224L3.9 1.7000000000000224L5.2 3.2000000000000224M2.6 4.600000000000023L3.9 6.100000000000023L5.2 4.600000000000023" stroke="#fff" stroke-width="0.75" fill="none"/></svg><div class="t" style="right:119.39999999999998px;top:318.1px;font-size:6.6px;color:#222;font-weight:normal">Line Spacing:</div><div class="a" style="left:632px;top:316.3px;width:84px;height:9.200000000000045px;background:#fff;box-shadow:0 0 0 0.5px rgba(0,0,0,0.08),0 0.5px 0.5px rgba(0,0,0,0.12)"></div><div class="t" style="left:632.8px;top:317.90000000000003px;font-size:6.6px;color:#222">1</div><div class="t" style="right:119.39999999999998px;top:329.7px;font-size:6.6px;color:#222;font-weight:normal">Backward:</div><div class="a" style="left:632px;top:327.9px;width:83.79999999999995px;height:9.200000000000045px;background:#fff;border-radius:2px;box-shadow:0 0 0 0.5px rgba(0,0,0,0.07),0 0.5px 1px rgba(0,0,0,0.18)"></div><div class="t" style="left:634px;top:329.5px;font-size:6.6px;color:#222">No</div><div class="a" style="left:707.3px;top:328.59999999999997px;width:7.8px;height:7.800000000000045px;background:#1a7df6;border-radius:2px"></div><svg class="a" style="left:707.3px;top:328.59999999999997px" width="7.8" height="7.800000000000045" viewBox="0 0 7.8 7.800000000000045"><path d="M2.6 3.2000000000000224L3.9 1.7000000000000224L5.2 3.2000000000000224M2.6 4.600000000000023L3.9 6.100000000000023L5.2 4.600000000000023" stroke="#fff" stroke-width="0.75" fill="none"/></svg><div class="t" style="right:119.39999999999998px;top:341.3px;font-size:6.6px;color:#222;font-weight:normal">Upside Down:</div><div class="a" style="left:632px;top:339.5px;width:83.79999999999995px;height:9.200000000000045px;background:#fff;border-radius:2px;box-shadow:0 0 0 0.5px rgba(0,0,0,0.07),0 0.5px 1px rgba(0,0,0,0.18)"></div><div class="t" style="left:634px;top:341.1px;font-size:6.6px;color:#222">No</div><div class="a" style="left:707.3px;top:340.2px;width:7.8px;height:7.800000000000045px;background:#1a7df6;border-radius:2px"></div><svg class="a" style="left:707.3px;top:340.2px" width="7.8" height="7.800000000000045" viewBox="0 0 7.8 7.800000000000045"><path d="M2.6 3.2000000000000224L3.9 1.7000000000000224L5.2 3.2000000000000224M2.6 4.600000000000023L3.9 6.100000000000023L5.2 4.600000000000023" stroke="#fff" stroke-width="0.75" fill="none"/></svg><div class="t" style="left:588.7px;top:352px;font-size:6.5px;font-weight:bold;color:#222">Text Position</div><div class="t" style="right:119.39999999999998px;top:362.6px;font-size:6.6px;color:#222;font-weight:normal">X:</div><div class="a" style="left:632px;top:361.1px;width:84px;height:8.899999999999977px;background:#fff;box-shadow:0 0 0 0.5px rgba(0,0,0,0.08),0 0.5px 0.5px rgba(0,0,0,0.12)"></div><div class="t" style="left:632.8px;top:362.55px;font-size:6.6px;color:#222">100</div><div class="t" style="right:119.39999999999998px;top:373.9px;font-size:6.6px;color:#222;font-weight:normal">Y:</div><div class="a" style="left:632px;top:372.4px;width:84px;height:8.900000000000034px;background:#fff;box-shadow:0 0 0 0.5px rgba(0,0,0,0.08),0 0.5px 0.5px rgba(0,0,0,0.12)"></div><div class="t" style="left:632.8px;top:373.85px;font-size:6.6px;color:#222">80</div><div class="t" style="left:588.7px;top:384px;font-size:6.5px;font-weight:bold;color:#222">Alignment</div><div class="t" style="right:119.39999999999998px;top:393.9px;font-size:6.6px;color:#222;font-weight:normal">Horizontal:</div><div class="a" style="left:632px;top:392.3px;width:83.79999999999995px;height:9.199999999999989px;background:#fff;border-radius:2px;box-shadow:0 0 0 0.5px rgba(0,0,0,0.07),0 0.5px 1px rgba(0,0,0,0.18)"></div><div class="t" style="left:634px;top:393.90000000000003px;font-size:6.6px;color:#222">Left</div><div class="a" style="left:707.3px;top:393.0px;width:7.8px;height:7.799999999999988px;background:#1a7df6;border-radius:2px"></div><svg class="a" style="left:707.3px;top:393.0px" width="7.8" height="7.799999999999988" viewBox="0 0 7.8 7.799999999999988"><path d="M2.6 3.199999999999994L3.9 1.699999999999994L5.2 3.199999999999994M2.6 4.599999999999994L3.9 6.099999999999994L5.2 4.599999999999994" stroke="#fff" stroke-width="0.75" fill="none"/></svg></div>
<div class="a" style="left:36px;top:366px;width:11px;height:8px;background:#ececec"></div><div class="a" style="left:148px;top:368.3px;width:271px;height:4.4px;border-radius:2.2px;background:#7a7a7a"></div><div class="a" style="left:532px;top:366px;width:27px;height:8px;background:#e6e6e6"></div><div class="t" style="left:541px;top:367.3px;font-size:6.5px;color:#222">10 &lt; 100</div><div class="a" style="left:561.5px;top:196px;width:3.6px;height:97px;border-radius:1.8px;background:#111"></div><div class="t" style="left:38.7px;top:377.2px;font-size:6.6px;color:#1c1cc8;-webkit-text-stroke:0.1px #1f1fd0">Command: gp</div><div class="t" style="left:36.6px;top:390px;font-size:6.5px;color:#111">Command:</div><div class="a" style="left:71px;top:388px;width:496px;height:9px;background:#fff"></div><div class="a" style="left:555px;top:387px;width:11px;height:10px;background:linear-gradient(#fafafa,#e8e8e8);border:0.8px solid #c8c8c8;border-radius:1.5px"></div><div class="a" style="left:557.5px;top:390px;width:6px;height:4px;border:0.8px solid #333;border-top-width:1.6px"></div>
<div class="a" style="left:127px;top:401px;width:0.8px;height:20px;background:#aaa"></div><div class="t" style="left:1px;top:402.8px;font-size:5.2px;color:#222">284.4,32.4</div><div class="t" style="left:1px;top:414px;font-size:5.2px;color:#222">@184.4,-27.6</div><div class="t" style="left:128.5px;top:402.8px;font-size:5.2px;color:#222">286.2396&lt;6°</div><div class="t" style="left:128.5px;top:414px;font-size:5.2px;color:#222">@186.4541&lt;351°</div><div class="a" style="left:253.5px;top:409px;width:2px;height:2px;border-radius:1px;background:#bbb"></div><div class="t" style="right:401px;top:406.4px;font-size:5.2px;color:#222;text-align:right">Select entity or region<br>Move entity or reference</div><svg class="a" style="left:358px;top:402.5px" width="10" height="16" viewBox="0 0 10 16"><rect x="0.7" y="0.7" width="8.6" height="14.6" rx="4.3" fill="#fff" stroke="#444" stroke-width="0.9"/><path d="M0.7 7.3H9.3M5 0.7V7.3" stroke="#444" stroke-width="0.8"/><rect x="4.2" y="2.5" width="1.6" height="3" fill="#333"/></svg><div class="a" style="left:470px;top:409px;width:2px;height:2px;border-radius:1px;background:#bbb"></div><div class="t" style="left:474.4px;top:406.4px;font-size:5.2px;color:#222;line-height:1.08">Selected entities:<br>1 Text on Layer "0".</div><div class="a" style="left:631px;top:404.5px;width:86px;height:10.5px;background:rgba(235,130,140,0.42)"></div><div class="a" style="left:627px;top:403.6px;width:93px;height:1.2px;background:#e97a7a"></div><div class="a" style="left:627px;top:414.6px;width:93px;height:1.2px;background:#e97a7a"></div><div class="a" style="left:630.6px;top:401.5px;width:1.1px;height:17px;background:#e97a7a"></div><div class="a" style="left:716.6px;top:401.5px;width:1.1px;height:17px;background:#e97a7a"></div><div class="a" style="left:654.7px;top:389.8px;width:38.6px;height:38.6px;border-radius:50%;background:radial-gradient(circle,rgba(255,255,255,0.12) 60%,rgba(255,255,255,0.0) 75%);box-shadow:0 0 1.2px 0.6px rgba(150,175,200,0.55),inset 0 0 0 1.4px rgba(150,175,200,0.65),inset 0 0 3px 2px rgba(175,195,215,0.45)"></div><svg class="a" style="left:673px;top:408px" width="10" height="14" viewBox="0 0 10 14"><path d="M1 1V12L3.6 9.6L5.6 13.6L7.4 12.8L5.4 8.9H8.8Z" fill="#fff" stroke="#222" stroke-width="0.8"/></svg>
<div class="a" style="left:3px;top:16px;width:2px;height:1px;background:#a0a0a0"></div><div class="a" style="left:3px;top:19px;width:2px;height:1px;background:#a0a0a0"></div><div class="a" style="left:3px;top:22px;width:2px;height:1px;background:#a0a0a0"></div><div class="a" style="left:3px;top:25px;width:2px;height:1px;background:#a0a0a0"></div><div class="a" style="left:3px;top:28px;width:2px;height:1px;background:#a0a0a0"></div><div class="a" style="left:6.1px;top:12.8px;width:21px;height:20.5px;background:#bdbdbd;border-radius:2px"></div><svg class="a" style="left:12px;top:17.5px" width="9" height="12" viewBox="0 0 9 12"><path d="M1 0.8V9.6L3.1 7.7L4.6 11.2L6.2 10.5L4.8 7.2H7.6Z" fill="#fff" stroke="#555" stroke-width="0.8"/></svg><div class="a" style="left:44px;top:14.6px;width:0.9px;height:1.4px;background:#9a9a9a"></div><div class="a" style="left:44px;top:17.55px;width:0.9px;height:1.4px;background:#9a9a9a"></div><div class="a" style="left:44px;top:20.5px;width:0.9px;height:1.4px;background:#9a9a9a"></div><div class="a" style="left:44px;top:23.450000000000003px;width:0.9px;height:1.4px;background:#9a9a9a"></div><div class="a" style="left:44px;top:26.4px;width:0.9px;height:1.4px;background:#9a9a9a"></div><div class="a" style="left:44px;top:29.35px;width:0.9px;height:1.4px;background:#9a9a9a"></div><div class="a" style="left:44px;top:32.300000000000004px;width:0.9px;height:1.4px;background:#9a9a9a"></div><div class="a" style="left:93.3px;top:14.6px;width:0.9px;height:1.4px;background:#9a9a9a"></div><div class="a" style="left:93.3px;top:17.55px;width:0.9px;height:1.4px;background:#9a9a9a"></div><div class="a" style="left:93.3px;top:20.5px;width:0.9px;height:1.4px;background:#9a9a9a"></div><div class="a" style="left:93.3px;top:23.450000000000003px;width:0.9px;height:1.4px;background:#9a9a9a"></div><div class="a" style="left:93.3px;top:26.4px;width:0.9px;height:1.4px;background:#9a9a9a"></div><div class="a" style="left:93.3px;top:29.35px;width:0.9px;height:1.4px;background:#9a9a9a"></div><div class="a" style="left:93.3px;top:32.300000000000004px;width:0.9px;height:1.4px;background:#9a9a9a"></div><div class="a" style="left:144.4px;top:14.6px;width:0.9px;height:1.4px;background:#9a9a9a"></div><div class="a" style="left:144.4px;top:17.55px;width:0.9px;height:1.4px;background:#9a9a9a"></div><div class="a" style="left:144.4px;top:20.5px;width:0.9px;height:1.4px;background:#9a9a9a"></div><div class="a" style="left:144.4px;top:23.450000000000003px;width:0.9px;height:1.4px;background:#9a9a9a"></div><div class="a" style="left:144.4px;top:26.4px;width:0.9px;height:1.4px;background:#9a9a9a"></div><div class="a" style="left:144.4px;top:29.35px;width:0.9px;height:1.4px;background:#9a9a9a"></div><div class="a" style="left:144.4px;top:32.300000000000004px;width:0.9px;height:1.4px;background:#9a9a9a"></div><div class="a" style="left:172.2px;top:14.6px;width:0.9px;height:1.4px;background:#9a9a9a"></div><div class="a" style="left:172.2px;top:17.55px;width:0.9px;height:1.4px;background:#9a9a9a"></div><div class="a" style="left:172.2px;top:20.5px;width:0.9px;height:1.4px;background:#9a9a9a"></div><div class="a" style="left:172.2px;top:23.450000000000003px;width:0.9px;height:1.4px;background:#9a9a9a"></div><div class="a" style="left:172.2px;top:26.4px;width:0.9px;height:1.4px;background:#9a9a9a"></div><div class="a" style="left:172.2px;top:29.35px;width:0.9px;height:1.4px;background:#9a9a9a"></div><div class="a" style="left:172.2px;top:32.300000000000004px;width:0.9px;height:1.4px;background:#9a9a9a"></div><div class="a" style="left:201.7px;top:14.6px;width:0.9px;height:1.4px;background:#9a9a9a"></div><div class="a" style="left:201.7px;top:17.55px;width:0.9px;height:1.4px;background:#9a9a9a"></div><div class="a" style="left:201.7px;top:20.5px;width:0.9px;height:1.4px;background:#9a9a9a"></div><div class="a" style="left:201.7px;top:23.450000000000003px;width:0.9px;height:1.4px;background:#9a9a9a"></div><div class="a" style="left:201.7px;top:26.4px;width:0.9px;height:1.4px;background:#9a9a9a"></div><div class="a" style="left:201.7px;top:29.35px;width:0.9px;height:1.4px;background:#9a9a9a"></div><div class="a" style="left:201.7px;top:32.300000000000004px;width:0.9px;height:1.4px;background:#9a9a9a"></div><div class="a" style="left:251.6px;top:14.6px;width:0.9px;height:1.4px;background:#9a9a9a"></div><div class="a" style="left:251.6px;top:17.55px;width:0.9px;height:1.4px;background:#9a9a9a"></div><div class="a" style="left:251.6px;top:20.5px;width:0.9px;height:1.4px;background:#9a9a9a"></div><div class="a" style="left:251.6px;top:23.450000000000003px;width:0.9px;height:1.4px;background:#9a9a9a"></div><div class="a" style="left:251.6px;top:26.4px;width:0.9px;height:1.4px;background:#9a9a9a"></div><div class="a" style="left:251.6px;top:29.35px;width:0.9px;height:1.4px;background:#9a9a9a"></div><div class="a" style="left:251.6px;top:32.300000000000004px;width:0.9px;height:1.4px;background:#9a9a9a"></div><div class="a" style="left:279.4px;top:14.6px;width:0.9px;height:1.4px;background:#9a9a9a"></div><div class="a" style="left:279.4px;top:17.55px;width:0.9px;height:1.4px;background:#9a9a9a"></div><div class="a" style="left:279.4px;top:20.5px;width:0.9px;height:1.4px;background:#9a9a9a"></div><div class="a" style="left:279.4px;top:23.450000000000003px;width:0.9px;height:1.4px;background:#9a9a9a"></div><div class="a" style="left:279.4px;top:26.4px;width:0.9px;height:1.4px;background:#9a9a9a"></div><div class="a" style="left:279.4px;top:29.35px;width:0.9px;height:1.4px;background:#9a9a9a"></div><div class="a" style="left:279.4px;top:32.300000000000004px;width:0.9px;height:1.4px;background:#9a9a9a"></div><div class="a" style="left:354.4px;top:14.6px;width:0.9px;height:1.4px;background:#9a9a9a"></div><div class="a" style="left:354.4px;top:17.55px;width:0.9px;height:1.4px;background:#9a9a9a"></div><div class="a" style="left:354.4px;top:20.5px;width:0.9px;height:1.4px;background:#9a9a9a"></div><div class="a" style="left:354.4px;top:23.450000000000003px;width:0.9px;height:1.4px;background:#9a9a9a"></div><div class="a" style="left:354.4px;top:26.4px;width:0.9px;height:1.4px;background:#9a9a9a"></div><div class="a" style="left:354.4px;top:29.35px;width:0.9px;height:1.4px;background:#9a9a9a"></div><div class="a" style="left:354.4px;top:32.300000000000004px;width:0.9px;height:1.4px;background:#9a9a9a"></div><div class="a" style="left:427.4px;top:14.6px;width:0.9px;height:1.4px;background:#9a9a9a"></div><div class="a" style="left:427.4px;top:17.55px;width:0.9px;height:1.4px;background:#9a9a9a"></div><div class="a" style="left:427.4px;top:20.5px;width:0.9px;height:1.4px;background:#9a9a9a"></div><div class="a" style="left:427.4px;top:23.450000000000003px;width:0.9px;height:1.4px;background:#9a9a9a"></div><div class="a" style="left:427.4px;top:26.4px;width:0.9px;height:1.4px;background:#9a9a9a"></div><div class="a" style="left:427.4px;top:29.35px;width:0.9px;height:1.4px;background:#9a9a9a"></div><div class="a" style="left:427.4px;top:32.300000000000004px;width:0.9px;height:1.4px;background:#9a9a9a"></div><div class="a" style="left:455.5px;top:14.6px;width:0.9px;height:1.4px;background:#9a9a9a"></div><div class="a" style="left:455.5px;top:17.55px;width:0.9px;height:1.4px;background:#9a9a9a"></div><div class="a" style="left:455.5px;top:20.5px;width:0.9px;height:1.4px;background:#9a9a9a"></div><div class="a" style="left:455.5px;top:23.450000000000003px;width:0.9px;height:1.4px;background:#9a9a9a"></div><div class="a" style="left:455.5px;top:26.4px;width:0.9px;height:1.4px;background:#9a9a9a"></div><div class="a" style="left:455.5px;top:29.35px;width:0.9px;height:1.4px;background:#9a9a9a"></div><div class="a" style="left:455.5px;top:32.300000000000004px;width:0.9px;height:1.4px;background:#9a9a9a"></div><div class="a" style="left:50.5px;top:16.3px;width:12px;height:14px;background:linear-gradient(135deg,#fff,#e4e4e4);border:0.8px solid #b0b0b0;border-radius:1px"></div><div class="a" style="left:58px;top:16px;width:5.6px;height:5.6px;border-radius:50%;background:radial-gradient(#fff7a0,#f2e020 60%,#e8d000)"></div><svg class="a" style="left:72px;top:16px" width="17" height="13" viewBox="0 0 17 13"><path d="M1 1.5H15V6H1Z" fill="#bdbdbd" stroke="#8c8c8c" stroke-width="0.6"/><path d="M2 2.5H14V7H2Z" fill="#eee"/><path d="M0.8 5H6L7 4H16.3L14.8 12.5H1.6Z" fill="#5b90d4" stroke="#3d6fb0" stroke-width="0.6"/></svg><svg class="a" style="left:100.8px;top:16.2px" width="13.5" height="13.5" viewBox="0 0 13.5 13.5"><rect x="0.6" y="0.6" width="12.3" height="12.3" rx="1.5" fill="#6c86e8" stroke="#4a55c0" stroke-width="0.9"/><rect x="2.6" y="1" width="8.3" height="5.8" fill="#f4f6ff"/><rect x="3.4" y="8.4" width="6.6" height="4.2" fill="#c8d4f8"/><rect x="4.4" y="9.2" width="1.6" height="2.6" fill="#3a48b0"/></svg><svg class="a" style="left:124px;top:16.2px" width="13.5" height="13.5" viewBox="0 0 13.5 13.5"><rect x="0.6" y="0.6" width="12.3" height="12.3" rx="1.5" fill="#6c86e8" stroke="#4a55c0" stroke-width="0.9"/><rect x="2.6" y="1" width="8.3" height="5.8" fill="#f4f6ff"/><rect x="3.4" y="8.4" width="6.6" height="4.2" fill="#c8d4f8"/><rect x="4.4" y="9.2" width="1.6" height="2.6" fill="#3a48b0"/></svg><svg class="a" style="left:128px;top:14.5px" width="11" height="12" viewBox="0 0 11 12"><path d="M2 10L9 2.2L10.5 3.6L3.5 11.3L1.3 11.9Z" fill="#f0b020" stroke="#c07010" stroke-width="0.7"/></svg><svg class="a" style="left:152.5px;top:16.5px" width="13.5" height="12.5" viewBox="0 0 13.5 12.5"><g fill="#f2a81c"><circle cx="6.75" cy="1.9" r="1.5"/><circle cx="3.9" cy="2.9" r="1.4"/><circle cx="9.6" cy="2.9" r="1.4"/><circle cx="1.9" cy="4.8" r="1.3"/><circle cx="11.6" cy="4.8" r="1.3"/><path d="M1.5 6.5A5.25 4.2 0 0 1 12 6.5Z"/></g><rect x="0.6" y="5.4" width="12.3" height="6.8" rx="1.6" fill="#111"/><text x="6.75" y="11.2" font-family="Liberation Sans" font-weight="bold" font-size="5.6" fill="#e8e8e8" text-anchor="middle" textLength="10" lengthAdjust="spacingAndGlyphs">SVG</text></svg><svg class="a" style="left:179.5px;top:15px" width="15.5" height="14" viewBox="0 0 15.5 14"><rect x="3" y="0.6" width="10" height="8" fill="#f8f8f8" stroke="#aaa" stroke-width="0.6"/><path d="M0.8 7.5H14.7V13.2H0.8Z" fill="#d8d8d8" stroke="#999" stroke-width="0.6"/><rect x="2" y="10.2" width="11.5" height="1.4" fill="#bbb"/><circle cx="6" cy="4.6" r="3.2" fill="#a8c8f0" stroke="#7a9ac0" stroke-width="0.7"/><path d="M8.3 6.8L11 9.2" stroke="#888" stroke-width="1.3"/></svg><svg class="a" style="left:206.5px;top:16.5px" width="16" height="13" viewBox="0 0 16 13"><path d="M4 5.5A5.3 5.3 0 1 1 7.4 11.4" fill="none" stroke="#2a9a3a" stroke-width="2"/><path d="M0.5 2.2V9.6H7.9Z" fill="#3aa84a"/></svg><svg class="a" style="left:229.5px;top:16.5px" width="16" height="13" viewBox="0 0 16 13"><path d="M12 5.5A5.3 5.3 0 1 0 8.6 11.4" fill="none" stroke="#80c08c" stroke-width="2"/><path d="M15.5 2.2V9.6H8.1Z" fill="#8cc898"/></svg><svg class="a" style="left:258.5px;top:16px" width="14" height="14" viewBox="0 0 14 14"><path d="M9.8 0.8L13.2 4.2L5 12.4L1.6 9Z" fill="#d42020" stroke="#a01010" stroke-width="0.6"/><path d="M10.8 2.2L11.8 3.2L4 11L3 10Z" fill="#f4f4f4"/><path d="M1.6 9L5 12.4L3.6 13.2L0.8 10.4Z" fill="#eee" stroke="#bbb" stroke-width="0.5"/><path d="M5 13.2H12" stroke="#ddd" stroke-width="0.8"/></svg><svg class="a" style="left:286px;top:15px" width="15" height="15" viewBox="0 0 15 15"><path d="M6.5 8.5L10.5 0.8M6.5 8.5L14.5 4.8" stroke="#c4c4c4" stroke-width="1.5"/><path d="M6.5 8.5L10.5 0.8M6.5 8.5L14.5 4.8" stroke="#888" stroke-width="0.4"/><ellipse cx="3.6" cy="7.6" rx="2.6" ry="1.8" transform="rotate(-20 3.6 7.6)" fill="none" stroke="#e02424" stroke-width="1.2"/><ellipse cx="7.2" cy="12" rx="1.8" ry="2.6" transform="rotate(-20 7.2 12)" fill="none" stroke="#e02424" stroke-width="1.2"/><path d="M1 12.6h2.6M2.3 11.3v2.6" stroke="#222" stroke-width="0.8"/></svg><svg class="a" style="left:309.5px;top:15px" width="14.5" height="15.5" viewBox="0 0 14.5 15.5"><rect x="0.6" y="0.6" width="8.5" height="10" fill="#fafafa" stroke="#c4c4c4" stroke-width="0.7"/><rect x="4.6" y="4" width="9.2" height="11" fill="#fafafa" stroke="#b4b4b4" stroke-width="0.7"/><path d="M6 7H12.4M6 8.8H12.4M6 10.6H12.4" stroke="#ccc" stroke-width="0.7"/><path d="M0.8 13.2h2.6M2.1 11.9v2.6" stroke="#222" stroke-width="0.8"/></svg><svg class="a" style="left:332.5px;top:15px" width="14" height="15.5" viewBox="0 0 14 15.5"><rect x="0.8" y="1.6" width="12.4" height="13.2" rx="1" fill="#f2f2f2" stroke="#b8843a" stroke-width="1.4"/><rect x="2.6" y="3.6" width="8.8" height="9.4" fill="#fafafa"/><path d="M3.8 6H10M3.8 8H10M3.8 10H10" stroke="#ccc" stroke-width="0.7"/><rect x="4.2" y="0.4" width="5.6" height="2.6" rx="1" fill="#9a9a9a"/></svg><svg class="a" style="left:361.5px;top:17px" width="11.5" height="12" viewBox="0 0 11.5 12"><path d="M2.2 9.4L8.8 1.4L10.8 3L4.2 11Z" fill="#dc2020" stroke="#a01818" stroke-width="0.5"/><path d="M2.2 9.4L4.2 11L1.6 11.4Z" fill="#f0d0a0"/><path d="M0.5 11.6H11.2" stroke="#e43030" stroke-width="0.8"/></svg><svg class="a" style="left:382.5px;top:17.5px" width="15" height="11.5" viewBox="0 0 15 11.5"><rect x="0.3" y="0.3" width="14.4" height="10.9" rx="0.8" fill="#0a0a88" stroke="#060660" stroke-width="0.6"/><path d="M2 9.5H12.5V2.5" stroke="#fff" stroke-width="0.7" stroke-dasharray="1 1.2" fill="none"/><path d="M2.5 9L12 3" stroke="#fff" stroke-width="0.7" stroke-dasharray="1 1.4"/></svg><div class="a" style="left:402.8px;top:12.8px;width:21.2px;height:20.5px;background:#bdbdbd;border-radius:2px"></div><svg class="a" style="left:403px;top:13px" width="21" height="20" viewBox="0 0 21 20"><circle cx="10" cy="9.7" r="6.6" fill="none" stroke="#111" stroke-width="1"/><path d="M3 17L17 2.6" stroke="#3a3ae0" stroke-width="0.8"/></svg><div class="a" style="left:431.1px;top:12.8px;width:21px;height:20.5px;background:#bdbdbd;border-radius:2px"></div><svg class="a" style="left:431.1px;top:12.8px" width="21" height="20.5"><rect x="4.099999999999966" y="3.1999999999999993" width="1" height="1.8" fill="#555"/><rect x="4.099999999999966" y="7.199999999999999" width="1" height="1.8" fill="#555"/><rect x="4.099999999999966" y="11.2" width="1" height="1.8" fill="#555"/><rect x="4.099999999999966" y="15.2" width="1" height="1.8" fill="#555"/><rect x="8.099999999999966" y="3.1999999999999993" width="1" height="1.8" fill="#555"/><rect x="8.099999999999966" y="7.199999999999999" width="1" height="1.8" fill="#555"/><rect x="8.099999999999966" y="11.2" width="1" height="1.8" fill="#555"/><rect x="8.099999999999966" y="15.2" width="1" height="1.8" fill="#555"/><rect x="12.099999999999966" y="3.1999999999999993" width="1" height="1.8" fill="#555"/><rect x="12.099999999999966" y="7.199999999999999" width="1" height="1.8" fill="#555"/><rect x="12.099999999999966" y="11.2" width="1" height="1.8" fill="#555"/><rect x="12.099999999999966" y="15.2" width="1" height="1.8" fill="#555"/><rect x="16.099999999999966" y="3.1999999999999993" width="1" height="1.8" fill="#555"/><rect x="16.099999999999966" y="7.199999999999999" width="1" height="1.8" fill="#555"/><rect x="16.099999999999966" y="11.2" width="1" height="1.8" fill="#555"/><rect x="16.099999999999966" y="15.2" width="1" height="1.8" fill="#555"/></svg><svg class="a" style="left:461px;top:14.3px" width="17" height="17" viewBox="0 0 17 17"><ellipse cx="9" cy="13.5" rx="5" ry="1.5" fill="rgba(0,0,0,0.08)"/><path d="M10.6 10.6L14.2 14.2" stroke="#555" stroke-width="2" stroke-linecap="round"/><circle cx="7" cy="7" r="5.2" fill="#7aaae8" stroke="#f4f4f4" stroke-width="0.9"/><circle cx="7" cy="6" r="3.6" fill="rgba(255,255,255,0.25)"/><path d="M4.3 7H9.7M7 4.3V9.7" stroke="#fff" stroke-width="1.4"/></svg><svg class="a" style="left:484.3px;top:14.3px" width="17" height="17" viewBox="0 0 17 17"><ellipse cx="9" cy="13.5" rx="5" ry="1.5" fill="rgba(0,0,0,0.08)"/><path d="M10.6 10.6L14.2 14.2" stroke="#555" stroke-width="2" stroke-linecap="round"/><circle cx="7" cy="7" r="5.2" fill="#7aaae8" stroke="#f4f4f4" stroke-width="0.9"/><circle cx="7" cy="6" r="3.6" fill="rgba(255,255,255,0.25)"/><path d="M4.3 7H9.7" stroke="#fff" stroke-width="1.4"/></svg><svg class="a" style="left:507.20000000000005px;top:14.3px" width="17" height="17" viewBox="0 0 17 17"><ellipse cx="9" cy="13.5" rx="5" ry="1.5" fill="rgba(0,0,0,0.08)"/><path d="M10.6 10.6L14.2 14.2" stroke="#555" stroke-width="2" stroke-linecap="round"/><circle cx="7" cy="7" r="5.2" fill="#7aaae8" stroke="#f4f4f4" stroke-width="0.9"/><circle cx="7" cy="6" r="3.6" fill="rgba(255,255,255,0.25)"/><path d="M4.4 5.6V4.4H5.6M8.4 4.4H9.6V5.6M9.6 8.4V9.6H8.4M5.6 9.6H4.4V8.4" stroke="#fff" stroke-width="0.9" fill="none"/></svg><svg class="a" style="left:530.2px;top:14.3px" width="17" height="17" viewBox="0 0 17 17"><ellipse cx="9" cy="13.5" rx="5" ry="1.5" fill="rgba(0,0,0,0.08)"/><path d="M10.6 10.6L14.2 14.2" stroke="#555" stroke-width="2" stroke-linecap="round"/><circle cx="7" cy="7" r="5.2" fill="#7aaae8" stroke="#f4f4f4" stroke-width="0.9"/><circle cx="7" cy="6" r="3.6" fill="rgba(255,255,255,0.25)"/><path d="M4.1 5.9V4.1H5.9M8.1 4.1H9.9V5.9M9.9 8.1V9.9H8.1M5.9 9.9H4.1V8.1" stroke="#e01010" stroke-width="1.3" fill="none"/></svg><svg class="a" style="left:553.3px;top:14.3px" width="17" height="17" viewBox="0 0 17 17"><ellipse cx="9" cy="13.5" rx="5" ry="1.5" fill="rgba(0,0,0,0.08)"/><path d="M10.6 10.6L14.2 14.2" stroke="#555" stroke-width="2" stroke-linecap="round"/><circle cx="7" cy="7" r="5.2" fill="#7aaae8" stroke="#f4f4f4" stroke-width="0.9"/><circle cx="7" cy="6" r="3.6" fill="rgba(255,255,255,0.25)"/><path d="M4 7H10M4 7L6.4 4.6M4 7L6.4 9.4" stroke="#fff" stroke-width="1.3" fill="none"/></svg><div class="a" style="left:577.2px;top:15px;width:13.6px;height:9.8px;background:#fff;border:1px solid #8aa6d8"></div><svg class="a" style="left:578px;top:17.5px" width="14" height="14" viewBox="0 0 14 14"><path d="M8.6 8.6L11.6 11.6" stroke="#555" stroke-width="1.8" stroke-linecap="round"/><ellipse cx="6" cy="6.4" rx="4.6" ry="3.8" fill="#7aaae8" stroke="#f4f4f4" stroke-width="0.8"/></svg><svg class="a" style="left:599.5px;top:14.7px" width="17" height="17" viewBox="0 0 17 17"><ellipse cx="9" cy="13.5" rx="5" ry="1.5" fill="rgba(0,0,0,0.08)"/><path d="M10.6 10.6L14.2 14.2" stroke="#555" stroke-width="2" stroke-linecap="round"/><circle cx="7" cy="7" r="5.2" fill="#7aaae8" stroke="#f4f4f4" stroke-width="0.9"/><circle cx="7" cy="6" r="3.6" fill="rgba(255,255,255,0.25)"/><path d="M2.5 7H11.5M7 2.5V11.5" stroke="#fff" stroke-width="1.2"/></svg><div class="a" style="left:3px;top:38px;width:2px;height:1.5px;background:#a8a8a8"></div><div class="a" style="left:3px;top:41px;width:2px;height:1.5px;background:#a8a8a8"></div><div class="a" style="left:3px;top:44px;width:2px;height:1.5px;background:#a8a8a8"></div><div class="a" style="left:3px;top:47px;width:2px;height:1.5px;background:#a8a8a8"></div><div class="a" style="left:7.1px;top:36px;width:21.8px;height:15.7px;border:1px solid #8a8a8a;border-radius:3px;background:linear-gradient(#fafafa,#ececec)"></div><svg class="a" style="left:15px;top:38.6px" width="8" height="11" viewBox="0 0 8 11"><path d="M0.8 0.6V8.8L2.7 7.1L4.1 10.3L5.5 9.7L4.2 6.6H6.8Z" fill="#fff" stroke="#666" stroke-width="0.7"/></svg><div class="a" style="left:33.6px;top:36.0px;width:1px;height:1.2px;background:#999"></div><div class="a" style="left:33.6px;top:38.9px;width:1px;height:1.2px;background:#999"></div><div class="a" style="left:33.6px;top:41.8px;width:1px;height:1.2px;background:#999"></div><div class="a" style="left:33.6px;top:44.7px;width:1px;height:1.2px;background:#999"></div><div class="a" style="left:33.6px;top:47.6px;width:1px;height:1.2px;background:#999"></div><div class="a" style="left:33.6px;top:50.5px;width:1px;height:1.2px;background:#999"></div>
<div class="a" style="left:0;top:53px;width:36px;height:346px;background:linear-gradient(90deg,#e2e2e2,#d6d6d6);border-right:1px solid #c2c2c2"></div><div class="a" style="left:0;top:53.5px;width:35.5px;height:7.5px;background:linear-gradient(#e6e6e6,#d8d8d8)"></div><div class="a" style="left:2.8px;top:58px;width:1.6px;height:0.9px;background:#a4a4a4"></div><div class="a" style="left:5.8px;top:58px;width:1.6px;height:0.9px;background:#a4a4a4"></div><div class="a" style="left:8.8px;top:58px;width:1.6px;height:0.9px;background:#a4a4a4"></div><div class="a" style="left:11.8px;top:58px;width:1.6px;height:0.9px;background:#a4a4a4"></div><div class="a" style="left:14.8px;top:58px;width:1.6px;height:0.9px;background:#a4a4a4"></div><div class="a" style="left:17.8px;top:58px;width:1.6px;height:0.9px;background:#a4a4a4"></div><div class="a" style="left:20.8px;top:58px;width:1.6px;height:0.9px;background:#a4a4a4"></div><div class="a" style="left:23.8px;top:58px;width:1.6px;height:0.9px;background:#a4a4a4"></div><div class="a" style="left:26.8px;top:58px;width:1.6px;height:0.9px;background:#a4a4a4"></div><div class="a" style="left:29.8px;top:58px;width:1.6px;height:0.9px;background:#a4a4a4"></div><div class="a" style="left:0;top:61px;width:35.5px;height:187px;background:#c9c9c9"></div><div class="a" style="left:0.8px;top:61.6px;width:16.4px;height:16.300000000000004px;background:linear-gradient(#f0f0f0,#e6e6e6)"></div><div class="a" style="left:18.8px;top:61.6px;width:16.4px;height:16.300000000000004px;background:linear-gradient(#f0f0f0,#e6e6e6)"></div><div class="a" style="left:0.8px;top:78.7px;width:16.4px;height:16.5px;background:linear-gradient(#f0f0f0,#e6e6e6)"></div><div class="a" style="left:18.8px;top:78.7px;width:16.4px;height:16.5px;background:linear-gradient(#f0f0f0,#e6e6e6)"></div><div class="a" style="left:0.8px;top:96.3px;width:16.4px;height:16.299999999999997px;background:linear-gradient(#f0f0f0,#e6e6e6)"></div><div class="a" style="left:18.8px;top:96.3px;width:16.4px;height:16.299999999999997px;background:linear-gradient(#f0f0f0,#e6e6e6)"></div><div class="a" style="left:0.8px;top:113.8px;width:16.4px;height:16.500000000000014px;background:linear-gradient(#f0f0f0,#e6e6e6)"></div><div class="a" style="left:18.8px;top:113.8px;width:16.4px;height:16.500000000000014px;background:linear-gradient(#f0f0f0,#e6e6e6)"></div><div class="a" style="left:0.8px;top:131.8px;width:16.4px;height:16.399999999999977px;background:linear-gradient(#f0f0f0,#e6e6e6)"></div><div class="a" style="left:18px;top:131.20000000000002px;width:17.5px;height:17.599999999999977px;background:linear-gradient(90deg,#d8d8d8,#cfcfcf)"></div><div class="a" style="left:0.8px;top:152.6px;width:16.4px;height:16.700000000000017px;background:linear-gradient(#f0f0f0,#e6e6e6)"></div><div class="a" style="left:18.8px;top:152.6px;width:16.4px;height:16.700000000000017px;background:linear-gradient(#f0f0f0,#e6e6e6)"></div><div class="a" style="left:0.8px;top:170.7px;width:16.4px;height:16.5px;background:linear-gradient(#f0f0f0,#e6e6e6)"></div><div class="a" style="left:18px;top:170.1px;width:17.5px;height:17.7px;background:linear-gradient(90deg,#d8d8d8,#cfcfcf)"></div><div class="a" style="left:0.8px;top:191.6px;width:16.4px;height:16.400000000000006px;background:linear-gradient(#f0f0f0,#e6e6e6)"></div><div class="a" style="left:18.8px;top:191.6px;width:16.4px;height:16.400000000000006px;background:linear-gradient(#f0f0f0,#e6e6e6)"></div><div class="a" style="left:0.8px;top:209.3px;width:16.4px;height:16.69999999999999px;background:linear-gradient(#f0f0f0,#e6e6e6)"></div><div class="a" style="left:18.8px;top:209.3px;width:16.4px;height:16.69999999999999px;background:linear-gradient(#f0f0f0,#e6e6e6)"></div><div class="a" style="left:0.8px;top:230.5px;width:16.4px;height:16.69999999999999px;background:linear-gradient(#f0f0f0,#e6e6e6)"></div><div class="a" style="left:17.2px;top:229.9px;width:18.3px;height:17.899999999999988px;background:linear-gradient(90deg,#e0e0e0,#d6d6d6)"></div><div class="a" style="left:0;top:148.2px;width:35.5px;height:4.400000000000006px;background:linear-gradient(90deg,#dedede,#d2d2d2)"></div><div class="a" style="left:0;top:187.2px;width:35.5px;height:4.400000000000006px;background:linear-gradient(90deg,#dedede,#d2d2d2)"></div><div class="a" style="left:0;top:226px;width:35.5px;height:4.5px;background:linear-gradient(90deg,#dedede,#d2d2d2)"></div><div class="a" style="left:0;top:247.2px;width:35.5px;height:152px;background:linear-gradient(90deg,#e8e8e8,#e0e0e0 45%,#cbcbcb)"></div><svg class="a" style="left:0;top:0" width="36" height="260"><path d="M5.5 63.8v3.4M3.8 65.5h3.4M12.5 68.7v3.4M10.8 70.4h3.4M6.4 71.6v3.4M4.7 73.3h3.4" stroke="#222" stroke-width="0.8"/><path d="M14.2 76.2L16.4 74.0V76.2Z" fill="#111"/><path d="M21 72.6L32.6 67" stroke="#333" stroke-width="0.8" stroke-dasharray="1.4 0.5"/><path d="M32.2 76.2L34.400000000000006 74.0V76.2Z" fill="#111"/><path d="M3.6 91.6A10 10 0 0 1 13.6 81.6" fill="none" stroke="#333" stroke-width="0.8"/><path d="M14.2 93.6L16.4 91.39999999999999V93.6Z" fill="#111"/><circle cx="26.6" cy="86.7" r="5" fill="none" stroke="#333" stroke-width="0.8"/><path d="M32.2 93.6L34.400000000000006 91.39999999999999V93.6Z" fill="#111"/><ellipse cx="9" cy="104.2" rx="7" ry="2.9" transform="rotate(-48 9 104.2)" fill="none" stroke="#333" stroke-width="0.8"/><path d="M14.2 111L16.4 108.8V111Z" fill="#111"/><path d="M21.5 99.5C25 99 28 108 25 109.5C22 111 20.5 101 27 102.5C31 103.5 32 99 30 98.5" fill="none" stroke="#333" stroke-width="0.8"/><path d="M32.2 111L34.400000000000006 108.8V111Z" fill="#111"/><path d="M6.5 117.5C4 118 4 123.5 7 123.5H13.5" fill="none" stroke="#333" stroke-width="0.8"/><path d="M14.2 128.6L16.4 126.39999999999999V128.6Z" fill="#111"/><circle cx="23.4" cy="118" r="2.8" fill="none" stroke="#333" stroke-width="0.8"/><path d="M27.2 121.2L29.6 116.6L32 121.2Z" fill="none" stroke="#333" stroke-width="0.8"/><rect x="21" y="124.2" width="7" height="3" fill="none" stroke="#333" stroke-width="0.8"/><path d="M32.2 128.6L34.400000000000006 126.39999999999999V128.6Z" fill="#111"/><path d="M4 136.8L6 134.8H14V142.6H4Z" fill="#e8e8e8" stroke="#555" stroke-width="0.8"/><ellipse cx="9.6" cy="138.8" rx="2.8" ry="2" fill="none" stroke="#555" stroke-width="0.8"/><path d="M14.2 146.6L16.4 144.4V146.6Z" fill="#111"/><text x="9" y="166" font-family="Liberation Serif" font-size="13.6" fill="#111" text-anchor="middle">A</text><path d="M22 166V157M22 157.6H31M31 157V163" fill="none" stroke="#333" stroke-width="0.9"/><path d="M21 157h2M30 157h2" stroke="#333" stroke-width="1.4"/><path d="M32.2 167.6L34.400000000000006 165.4V167.6Z" fill="#111"/><rect x="3.6" y="173.8" width="10.8" height="9" fill="#fff" stroke="#333" stroke-width="0.8"/><path d="M4.5 182L8 178L10 180L11.5 178.8L13.6 182Z" fill="#111"/><circle cx="12" cy="176" r="1" fill="#111"/><path d="M2.6 196.4V206.4H12.6Z" fill="#f6f6f6" stroke="#444" stroke-width="0.8"/><path d="M4.4 201.6V204.6H7.4Z" fill="none" stroke="#666" stroke-width="0.6"/><path d="M5.2 194.2L9.6 198.4" stroke="#d42020" stroke-width="1.5"/><path d="M13.6 193.6L11.6 203.6M13.6 193.6L15.2 203" stroke="#333" stroke-width="0.7" fill="none"/><path d="M14.6 206.6L16.8 204.4V206.6Z" fill="#111"/><path d="M20.4 202.4V199.4Q22 198.4 24 199.4H30Q32 198.4 33.4 199.4V202.4Z" fill="#f8f8f8" stroke="#444" stroke-width="0.8"/><rect x="4" y="212" width="8" height="7.5" fill="#f3e2b0" stroke="#999" stroke-width="0.6"/><circle cx="10" cy="219" r="3.8" fill="#f3e6c0" stroke="#8a8a6a" stroke-width="0.8"/><path d="M2.6 220.5h2" stroke="#e02020" stroke-width="1"/><path d="M14.2 224.6L16.4 222.4V224.6Z" fill="#111"/><path d="M20.5 218L30.5 212.6" stroke="#e02020" stroke-width="0.8" stroke-dasharray="1.2 0.4"/><path d="M25 216.2V223.6L26.6 222.1L27.6 224.4L28.6 224L27.7 221.8H29.8Z" fill="#fff" stroke="#555" stroke-width="0.6"/><path d="M32.2 224.6L34.400000000000006 222.4V224.6Z" fill="#111"/><path d="M3.4 236.6L8.6 234L14.4 236.2V241.6L9.2 244.2L3.4 241.8Z" fill="#f4f4f4" stroke="#444" stroke-width="0.8"/><path d="M3.4 236.6L9.2 239V244.2M9.2 239L14.4 236.2" fill="none" stroke="#444" stroke-width="0.8"/><path d="M14.2 245.6L16.4 243.4V245.6Z" fill="#111"/></svg>
<div class="a" style="left:726.5px;top:53.5px;width:23.5px;height:345.5px;background:linear-gradient(90deg,#cdcdcd 0,#cdcdcd 0.8px,#ededed 1.6px,#e6e6e6 50%,#d4d4d4)"></div><div class="a" style="left:731.0px;top:57.8px;width:1px;height:1px;background:#999"></div><div class="a" style="left:733.7px;top:57.8px;width:1px;height:1px;background:#999"></div><div class="a" style="left:736.4px;top:57.8px;width:1px;height:1px;background:#999"></div><div class="a" style="left:739.1px;top:57.8px;width:1px;height:1px;background:#999"></div><div class="a" style="left:741.8px;top:57.8px;width:1px;height:1px;background:#999"></div><div class="a" style="left:744.5px;top:57.8px;width:1px;height:1px;background:#999"></div><div class="a" style="left:729.5px;top:130.5px;width:1.6px;height:0.8px;background:#aaa"></div><div class="a" style="left:732.5px;top:130.5px;width:1.6px;height:0.8px;background:#aaa"></div><div class="a" style="left:735.5px;top:130.5px;width:1.6px;height:0.8px;background:#aaa"></div><div class="a" style="left:738.5px;top:130.5px;width:1.6px;height:0.8px;background:#aaa"></div><div class="a" style="left:741.5px;top:130.5px;width:1.6px;height:0.8px;background:#aaa"></div><div class="a" style="left:744.5px;top:130.5px;width:1.6px;height:0.8px;background:#aaa"></div><div class="a" style="left:747.5px;top:130.5px;width:1.6px;height:0.8px;background:#aaa"></div><div class="a" style="left:729.5px;top:205px;width:1.6px;height:0.8px;background:#aaa"></div><div class="a" style="left:732.5px;top:205px;width:1.6px;height:0.8px;background:#aaa"></div><div class="a" style="left:735.5px;top:205px;width:1.6px;height:0.8px;background:#aaa"></div><div class="a" style="left:738.5px;top:205px;width:1.6px;height:0.8px;background:#aaa"></div><div class="a" style="left:741.5px;top:205px;width:1.6px;height:0.8px;background:#aaa"></div><div class="a" style="left:744.5px;top:205px;width:1.6px;height:0.8px;background:#aaa"></div><div class="a" style="left:747.5px;top:205px;width:1.6px;height:0.8px;background:#aaa"></div><div class="a" style="left:728.3px;top:60.6px;width:20.8px;height:20.199999999999996px;background:#bababa;border-radius:2px"></div><div class="a" style="left:728.3px;top:135.8px;width:20.8px;height:19.799999999999983px;background:#bababa;border-radius:2px"></div><div class="a" style="left:728.3px;top:208.8px;width:20.8px;height:19.799999999999983px;background:#bababa;border-radius:2px"></div><svg class="a" style="left:731.4px;top:63.6px" width="14" height="14" viewBox="0 0 14 14"><rect x="0.4" y="0.4" width="13.2" height="13.2" fill="#fafafa" stroke="#888" stroke-width="0.6"/><rect x="0" y="0" width="14" height="2.4" fill="#111"/><rect x="0.8" y="0.6" width="1.2" height="1.2" fill="#fff"/><path d="M4 7L8 4.2L10.5 5.5L6.5 10.5L4 9.5Z" fill="#f0a8b0" stroke="#555" stroke-width="0.6"/></svg><svg class="a" style="left:731.4px;top:87px" width="14" height="14" viewBox="0 0 14 14"><rect x="0.4" y="0.4" width="13.2" height="13.2" fill="#fafafa" stroke="#888" stroke-width="0.6"/><rect x="0" y="0" width="14" height="2.4" fill="#111"/><rect x="0.8" y="0.6" width="1.2" height="1.2" fill="#fff"/><rect x="4" y="5" width="4" height="3.5" fill="#f0d870" stroke="#777" stroke-width="0.5"/><rect x="6.2" y="7" width="4" height="3.5" fill="#f0d870" stroke="#777" stroke-width="0.5"/></svg><svg class="a" style="left:731.4px;top:110px" width="14" height="14" viewBox="0 0 14 14"><rect x="0.4" y="0.4" width="13.2" height="13.2" fill="#fafafa" stroke="#888" stroke-width="0.6"/><rect x="0" y="0" width="14" height="2.4" fill="#111"/><rect x="0.8" y="0.6" width="1.2" height="1.2" fill="#fff"/><rect x="2.5" y="4.8" width="9" height="6.5" fill="#e8f0f8" stroke="#a8c0d8" stroke-width="0.6"/></svg><svg class="a" style="left:731.4px;top:138.5px" width="14" height="14" viewBox="0 0 14 14"><rect x="0.4" y="0.4" width="13.2" height="13.2" fill="#fafafa" stroke="#888" stroke-width="0.6"/><rect x="0" y="0" width="14" height="2.4" fill="#111"/><rect x="0.8" y="0.6" width="1.2" height="1.2" fill="#fff"/><path d="M4.5 4.8H12M4.5 7.3H12M4.5 9.8H12M4.5 12.2H12" stroke="#111" stroke-width="1.3"/><path d="M2 4.8H3.2M2 7.3H3.2M2 9.8H3.2M2 12.2H3.2" stroke="#111" stroke-width="1.2"/></svg><svg class="a" style="left:731.4px;top:160.5px" width="14" height="14" viewBox="0 0 14 14"><rect x="0.4" y="0.4" width="13.2" height="13.2" fill="#fafafa" stroke="#888" stroke-width="0.6"/><rect x="0" y="0" width="14" height="2.4" fill="#111"/><rect x="0.8" y="0.6" width="1.2" height="1.2" fill="#fff"/><path d="M3 5H11L8 8.6V12H6V8.6Z" fill="#fff" stroke="#222" stroke-width="0.8"/></svg><svg class="a" style="left:731.4px;top:183.5px" width="14" height="14" viewBox="0 0 14 14"><rect x="0.4" y="0.4" width="13.2" height="13.2" fill="#fafafa" stroke="#888" stroke-width="0.6"/><rect x="0" y="0" width="14" height="2.4" fill="#111"/><rect x="0.8" y="0.6" width="1.2" height="1.2" fill="#fff"/><rect x="4.5" y="6.5" width="7" height="4" fill="#fff" stroke="#333" stroke-width="0.7"/><path d="M7 7.8h4M7 9.2h4" stroke="#333" stroke-width="0.6"/><path d="M3 4.5V12" stroke="#e02020" stroke-width="0.6"/></svg><svg class="a" style="left:731.4px;top:211.5px" width="14" height="14" viewBox="0 0 14 14"><rect x="0.4" y="0.4" width="13.2" height="13.2" fill="#fafafa" stroke="#888" stroke-width="0.6"/><rect x="0" y="0" width="14" height="2.4" fill="#111"/><rect x="0.8" y="0.6" width="1.2" height="1.2" fill="#fff"/><path d="M2.5 5h5M2.5 6.8h7M2.5 8.6h4M2.5 10.4h6M8 12h3.5" stroke="#999" stroke-width="0.6"/></svg><svg class="a" style="left:731.4px;top:236px" width="14" height="14" viewBox="0 0 14 14"><rect x="0.4" y="0.4" width="13.2" height="13.2" fill="#fafafa" stroke="#888" stroke-width="0.6"/><rect x="0" y="0" width="14" height="2.4" fill="#111"/><rect x="0.8" y="0.6" width="1.2" height="1.2" fill="#fff"/><rect x="3.5" y="4.5" width="7" height="8.5" fill="#f4e6c8" stroke="#b8863a" stroke-width="0.9"/><rect x="5.2" y="3.6" width="3.6" height="1.8" fill="#888"/></svg>
<div class="a" style="left:566.5px;top:53.5px;width:11px;height:345.5px;background:linear-gradient(90deg,#ececec 0,#ececec 50%,#e3e3e3 50%)"></div><div class="a" style="left:567.6px;top:177px;width:10px;height:57.8px;background:#1d7ff6;border-radius:2px 0 0 2px"></div><div class="a" style="left:567.8px;top:236px;width:9.8px;height:40px;background:#cfcfcf;border-radius:2px 0 0 2px"></div><div class="t" style="left:572.6px;top:206px;font-size:6.4px;color:#fff;transform:translate(-50%,-50%) rotate(-90deg)">Property Editor</div><div class="t" style="left:572.6px;top:256px;font-size:6.4px;color:#333;transform:translate(-50%,-50%) rotate(-90deg)">Layer List</div>
<svg class="a" style="left:47.5px;top:55.6px" width="7.5" height="7.5" viewBox="0 0 7.5 7.5"><circle cx="3.6" cy="3.6" r="2.8" fill="#dfe6f4" stroke="#2e4ea8" stroke-width="1.1"/><path d="M4.6 4.6L6.8 6.8" stroke="#e8a020" stroke-width="1.2"/></svg>
</body></html>
